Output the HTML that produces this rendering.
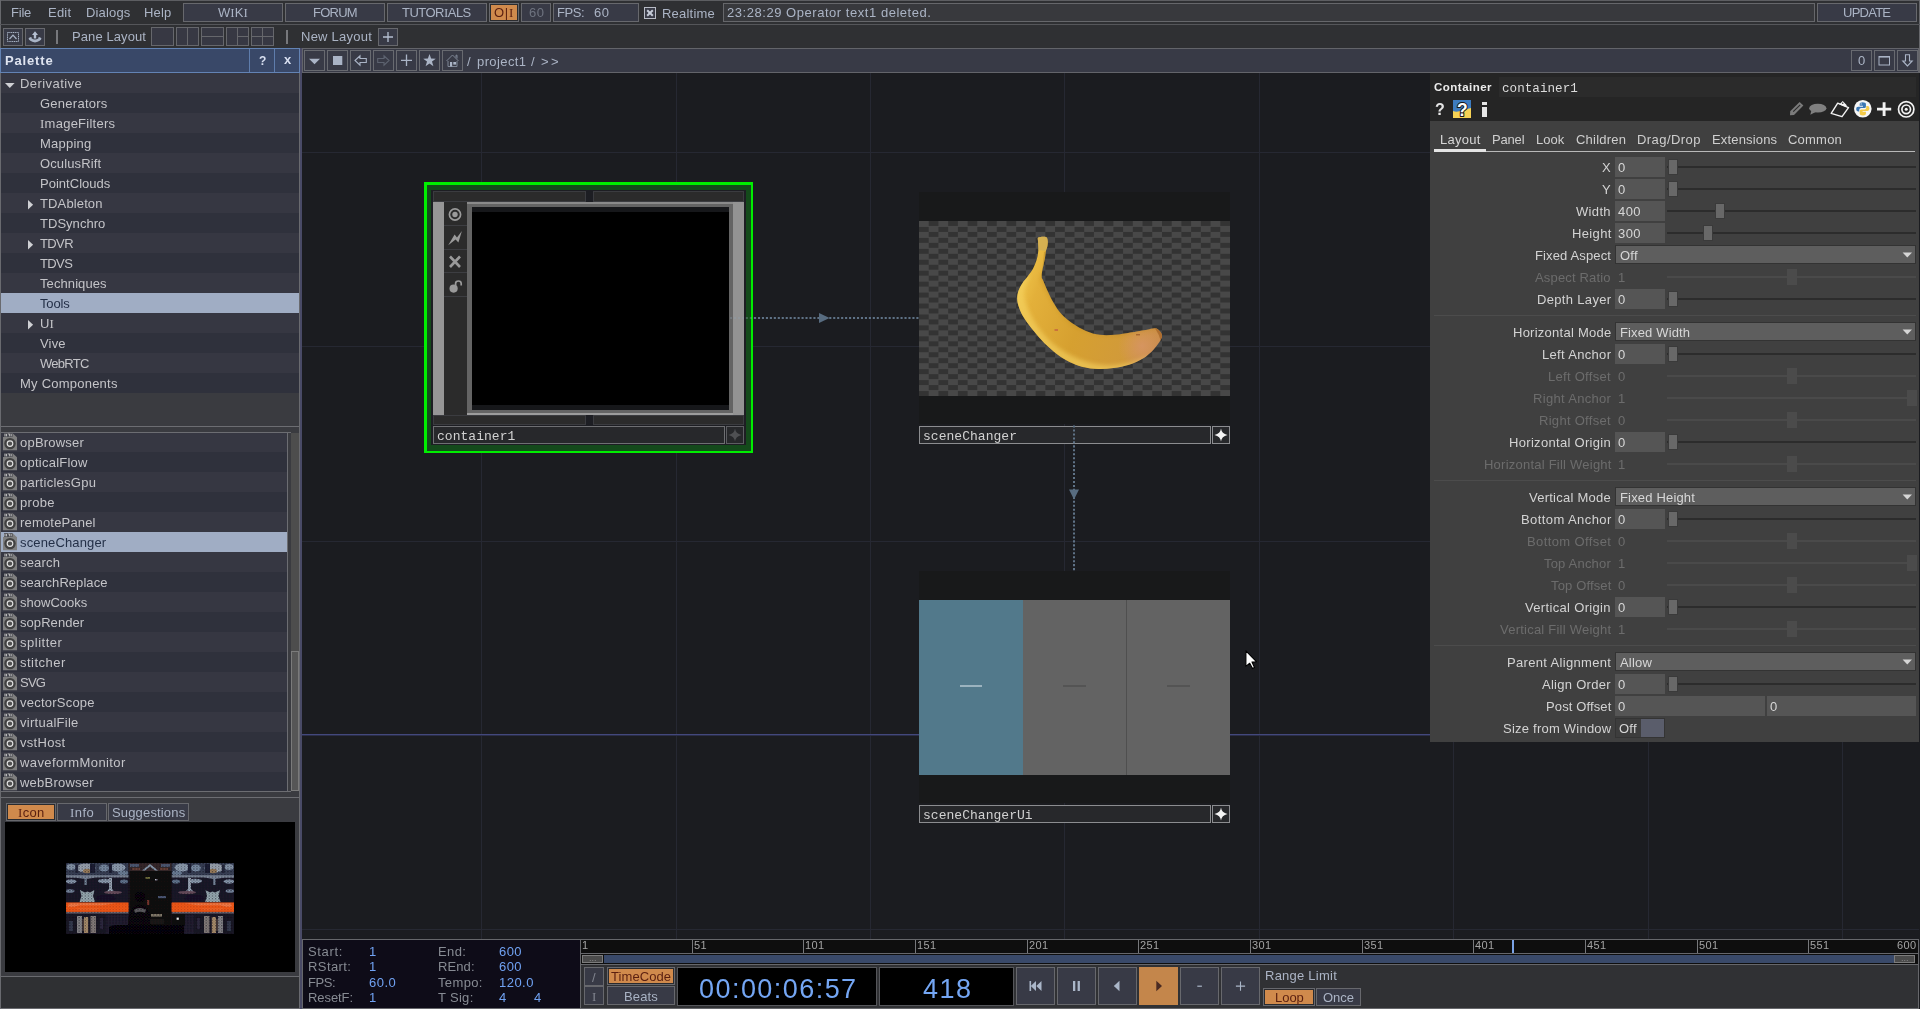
<!DOCTYPE html>
<html><head><meta charset="utf-8"><title>TouchDesigner</title>
<style>
html,body{margin:0;padding:0;}
body{width:1920px;height:1009px;overflow:hidden;background:#2f3033;position:relative;font-family:"Liberation Sans",sans-serif;}
div,svg,span.t{position:absolute;}
span.t{white-space:pre;will-change:transform;}
i.s{font-style:normal;font-family:"Liberation Serif",serif;}
svg{overflow:visible;}
</style></head><body>
<div style="left:0px;top:0px;width:1920px;height:1px;background:#5d5e62;"></div>
<div style="left:0px;top:0px;width:1px;height:1009px;background:#67686c;"></div>
<div style="left:1919px;top:0px;width:1px;height:73px;background:#67686c;"></div>
<div style="left:0px;top:1008px;width:1919px;height:1px;background:#5d5e62;"></div>
<div style="left:0px;top:24px;width:1920px;height:1px;background:#55565a;"></div>
<span class="t" style="left:11.00px;top:4.00px;font-size:13px;line-height:17px;color:#abb4c5;letter-spacing:-0.22px;">File</span>
<span class="t" style="left:48.00px;top:4.00px;font-size:13px;line-height:17px;color:#abb4c5;letter-spacing:0.21px;">Edit</span>
<span class="t" style="left:85.50px;top:4.00px;font-size:13px;line-height:17px;color:#abb4c5;letter-spacing:0.16px;">Dialogs</span>
<span class="t" style="left:143.50px;top:4.00px;font-size:13px;line-height:17px;color:#abb4c5;letter-spacing:0.15px;">Help</span>
<div style="left:183px;top:3px;width:100px;height:19px;background:#383a46;box-shadow:inset 0 0 0 1px #67686d;"></div>
<span class="t" style="left:218.13px;top:4.00px;font-size:13px;line-height:17px;color:#aab3c4;letter-spacing:0.05px;">W<i class="s">I</i>K<i class="s">I</i></span>
<div style="left:285px;top:3px;width:100px;height:19px;background:#383a46;box-shadow:inset 0 0 0 1px #67686d;"></div>
<span class="t" style="left:312.71px;top:4.00px;font-size:13px;line-height:17px;color:#aab3c4;letter-spacing:-0.77px;">FORUM</span>
<div style="left:387px;top:3px;width:100px;height:19px;background:#383a46;box-shadow:inset 0 0 0 1px #67686d;"></div>
<span class="t" style="left:402.36px;top:4.00px;font-size:13px;line-height:17px;color:#aab3c4;letter-spacing:-0.52px;">TUTOR<i class="s">I</i>ALS</span>
<div style="left:489px;top:3px;width:30px;height:19px;background:#2b2c30;box-shadow:inset 0 0 0 1px #67686d;"></div>
<div style="left:491px;top:5px;width:26px;height:15px;background:#d08a4c;"></div>
<span class="t" style="left:494.39px;top:4.00px;font-size:13px;line-height:17px;color:#5a1f10;letter-spacing:0.7px;">O|<i class="s">I</i></span>
<div style="left:521px;top:3px;width:30px;height:19px;background:#383a46;box-shadow:inset 0 0 0 1px #67686d;"></div>
<span class="t" style="left:528.57px;top:4.00px;font-size:13px;line-height:17px;color:#6f7480;letter-spacing:0.4px;">60</span>
<div style="left:553px;top:3px;width:86px;height:19px;background:#383a46;box-shadow:inset 0 0 0 1px #67686d;"></div>
<span class="t" style="left:557.00px;top:4.00px;font-size:13px;line-height:17px;color:#abb4c5;letter-spacing:-0.42px;">FPS:</span>
<span class="t" style="left:593.50px;top:4.00px;font-size:13px;line-height:17px;color:#abb4c5;letter-spacing:0.4px;">60</span>
<div style="left:644px;top:7px;width:12px;height:12px;background:#3a3c48;box-shadow:inset 0 0 0 1px #b8bcc6;"></div>
<svg style="left:644px;top:7px;" width="12" height="12" viewBox="0 0 12 12"><path d="M3.2 3.2 L8.8 8.8 M8.8 3.2 L3.2 8.8" stroke="#c6ccd8" stroke-width="2" fill="none"/></svg>
<span class="t" style="left:662.00px;top:4.50px;font-size:13px;line-height:17px;color:#abb4c5;letter-spacing:0.21px;">Realtime</span>
<div style="left:723px;top:3px;width:1092px;height:19px;background:#38393d;box-shadow:inset 0 0 0 1px #66676b;"></div>
<span class="t" style="left:727.00px;top:4.00px;font-size:13px;line-height:17px;color:#abb4c5;letter-spacing:0.54px;">23:28:29 Operator text1 deleted.</span>
<div style="left:1817px;top:3px;width:100px;height:19px;background:#383a46;box-shadow:inset 0 0 0 1px #67686d;"></div>
<span class="t" style="left:1842.99px;top:4.00px;font-size:13px;line-height:17px;color:#aab3c4;letter-spacing:-0.75px;">UPDATE</span>
<div style="left:3px;top:28px;width:20px;height:18px;background:#383a46;box-shadow:inset 0 0 0 1px #67686d;"></div>
<svg style="left:3px;top:28px;" width="20" height="18" viewBox="0 0 20 18"><rect x="4.5" y="4.5" width="11" height="9" fill="none" stroke="#a9b4c6" stroke-width="1" stroke-dasharray="1.2 0.6"/><path d="M6.5 11 L10 7.2 L13.5 11" fill="none" stroke="#a9b4c6" stroke-width="1.2"/></svg>
<div style="left:25px;top:28px;width:20px;height:18px;background:#383a46;box-shadow:inset 0 0 0 1px #67686d;"></div>
<svg style="left:25px;top:28px;" width="20" height="18" viewBox="0 0 20 18"><path d="M10 3.2 L13 7 L11.2 7 L11.2 10.5 L8.8 10.5 L8.8 7 L7 7 Z" fill="#b4bfd1"/><path d="M3.5 10.5 Q4.5 8.8 6.5 9 L6.5 10.2 Q10 12.6 13.5 10.2 L13.5 9 Q15.5 8.8 16.5 10.5 Q16 13.2 10 14.6 Q4 13.2 3.5 10.5 Z" fill="#a9b4c6"/></svg>
<div style="left:56px;top:30px;width:2px;height:14px;background:#77787c;"></div>
<span class="t" style="left:72.00px;top:28.00px;font-size:13px;line-height:17px;color:#abb4c5;letter-spacing:0.09px;">Pane Layout</span>
<div style="left:151px;top:27px;width:23px;height:19px;background:#373843;box-shadow:inset 0 0 0 1px #66676c;"></div>
<div style="left:176px;top:27px;width:23px;height:19px;background:#373843;box-shadow:inset 0 0 0 1px #66676c;"></div>
<div style="left:187px;top:27px;width:1px;height:19px;background:#66676c;"></div>
<div style="left:201px;top:27px;width:23px;height:19px;background:#373843;box-shadow:inset 0 0 0 1px #66676c;"></div>
<div style="left:201px;top:36px;width:23px;height:1px;background:#66676c;"></div>
<div style="left:226px;top:27px;width:23px;height:19px;background:#373843;box-shadow:inset 0 0 0 1px #66676c;"></div>
<div style="left:237px;top:27px;width:1px;height:19px;background:#66676c;"></div>
<div style="left:237px;top:36px;width:12px;height:1px;background:#66676c;"></div>
<div style="left:251px;top:27px;width:23px;height:19px;background:#373843;box-shadow:inset 0 0 0 1px #66676c;"></div>
<div style="left:262px;top:27px;width:1px;height:19px;background:#66676c;"></div>
<div style="left:251px;top:36px;width:23px;height:1px;background:#66676c;"></div>
<div style="left:286px;top:30px;width:2px;height:14px;background:#77787c;"></div>
<span class="t" style="left:301.00px;top:28.00px;font-size:13px;line-height:17px;color:#abb4c5;letter-spacing:0.25px;">New Layout</span>
<div style="left:378px;top:28px;width:20px;height:18px;background:#383a46;box-shadow:inset 0 0 0 1px #67686d;"></div>
<svg style="left:378px;top:28px;" width="20" height="18" viewBox="0 0 20 18"><path d="M10 4 V14 M5 9 H15" stroke="#b4bfd1" stroke-width="1.3" fill="none"/></svg>
<div style="left:0px;top:48px;width:300px;height:25px;background:#6383b4;"></div>
<div style="left:1px;top:49px;width:298px;height:23px;background:#394868;"></div>
<div style="left:249px;top:49px;width:1px;height:23px;background:#5f7dac;"></div>
<div style="left:274px;top:49px;width:1px;height:23px;background:#5f7dac;"></div>
<span class="t" style="left:5.00px;top:52.00px;font-size:13px;line-height:17px;color:#dfe4f0;letter-spacing:0.83px;font-weight:bold;">Palette</span>
<span class="t" style="left:259.13px;top:53.00px;font-size:12px;line-height:16px;color:#d8dff0;letter-spacing:-0.37px;font-weight:bold;">?</span>
<span class="t" style="left:283.58px;top:50.70px;font-size:13px;line-height:17px;color:#d8dff0;letter-spacing:0.51px;font-weight:bold;">x</span>
<div style="left:0px;top:73px;width:300px;height:936px;background:#696a6f;"></div>
<div style="left:1px;top:73px;width:298px;height:904px;background:#3a3b40;"></div>
<div style="left:1px;top:977px;width:298px;height:31px;background:#2f3033;"></div>
<div style="left:1px;top:976px;width:298px;height:1px;background:#696a6f;"></div>
<div style="left:1px;top:73px;width:298px;height:20px;background:#363742;"></div>
<span class="t" style="left:20.00px;top:75.00px;font-size:13px;line-height:17px;color:#c4c4c8;letter-spacing:0.43px;">Derivative</span>
<svg style="left:4.7px;top:82.6px;" width="10" height="6" viewBox="0 0 10 6"><path d="M0 0 H9.6 L4.8 5 Z" fill="#cfd0d4"/></svg>
<div style="left:1px;top:93px;width:298px;height:20px;background:#2f313c;"></div>
<span class="t" style="left:40.00px;top:95.00px;font-size:13px;line-height:17px;color:#c4c4c8;letter-spacing:0.26px;">Generators</span>
<div style="left:1px;top:113px;width:298px;height:20px;background:#363742;"></div>
<span class="t" style="left:40.00px;top:115.00px;font-size:13px;line-height:17px;color:#c4c4c8;letter-spacing:0.25px;"><i class="s">I</i>mageFilters</span>
<div style="left:1px;top:133px;width:298px;height:20px;background:#2f313c;"></div>
<span class="t" style="left:40.00px;top:135.00px;font-size:13px;line-height:17px;color:#c4c4c8;letter-spacing:0.23px;">Mapping</span>
<div style="left:1px;top:153px;width:298px;height:20px;background:#363742;"></div>
<span class="t" style="left:40.00px;top:155.00px;font-size:13px;line-height:17px;color:#c4c4c8;letter-spacing:0.13px;">OculusRift</span>
<div style="left:1px;top:173px;width:298px;height:20px;background:#2f313c;"></div>
<span class="t" style="left:40.00px;top:175.00px;font-size:13px;line-height:17px;color:#c4c4c8;letter-spacing:0.02px;">PointClouds</span>
<div style="left:1px;top:193px;width:298px;height:20px;background:#363742;"></div>
<span class="t" style="left:40.00px;top:195.00px;font-size:13px;line-height:17px;color:#c4c4c8;letter-spacing:0.13px;">TDAbleton</span>
<svg style="left:27.8px;top:199.8px;" width="6" height="11" viewBox="0 0 6 11"><path d="M0 0 L5.1 4.7 L0 9.4 Z" fill="#cfd0d4"/></svg>
<div style="left:1px;top:213px;width:298px;height:20px;background:#2f313c;"></div>
<span class="t" style="left:40.00px;top:215.00px;font-size:13px;line-height:17px;color:#c4c4c8;letter-spacing:0.03px;">TDSynchro</span>
<div style="left:1px;top:233px;width:298px;height:20px;background:#363742;"></div>
<span class="t" style="left:40.00px;top:235.00px;font-size:13px;line-height:17px;color:#c4c4c8;letter-spacing:-0.62px;">TDVR</span>
<svg style="left:27.8px;top:239.8px;" width="6" height="11" viewBox="0 0 6 11"><path d="M0 0 L5.1 4.7 L0 9.4 Z" fill="#cfd0d4"/></svg>
<div style="left:1px;top:253px;width:298px;height:20px;background:#2f313c;"></div>
<span class="t" style="left:40.00px;top:255.00px;font-size:13px;line-height:17px;color:#c4c4c8;letter-spacing:-0.62px;">TDVS</span>
<div style="left:1px;top:273px;width:298px;height:20px;background:#363742;"></div>
<span class="t" style="left:40.00px;top:275.00px;font-size:13px;line-height:17px;color:#c4c4c8;letter-spacing:0.09px;">Techniques</span>
<div style="left:1px;top:293px;width:298px;height:20px;background:#a0adc4;"></div>
<span class="t" style="left:40.00px;top:295.00px;font-size:13px;line-height:17px;color:#243048;letter-spacing:-0.16px;">Tools</span>
<div style="left:1px;top:313px;width:298px;height:20px;background:#363742;"></div>
<span class="t" style="left:40.00px;top:315.00px;font-size:13px;line-height:17px;color:#c4c4c8;letter-spacing:0.05px;">U<i class="s">I</i></span>
<svg style="left:27.8px;top:319.8px;" width="6" height="11" viewBox="0 0 6 11"><path d="M0 0 L5.1 4.7 L0 9.4 Z" fill="#cfd0d4"/></svg>
<div style="left:1px;top:333px;width:298px;height:20px;background:#2f313c;"></div>
<span class="t" style="left:40.00px;top:335.00px;font-size:13px;line-height:17px;color:#c4c4c8;letter-spacing:0.18px;">Vive</span>
<div style="left:1px;top:353px;width:298px;height:20px;background:#363742;"></div>
<span class="t" style="left:40.00px;top:355.00px;font-size:13px;line-height:17px;color:#c4c4c8;letter-spacing:-0.72px;">WebRTC</span>
<div style="left:1px;top:373px;width:298px;height:20px;background:#2f313c;"></div>
<span class="t" style="left:20.00px;top:375.00px;font-size:13px;line-height:17px;color:#c4c4c8;letter-spacing:0.23px;">My Components</span>
<div style="left:1px;top:426px;width:298px;height:1px;background:#6c6d72;"></div>
<div style="left:1px;top:432px;width:290px;height:1px;background:#6c6d72;"></div>
<div style="left:287px;top:432px;width:1px;height:360px;background:#6c6d72;"></div>
<div style="left:1px;top:791px;width:290px;height:1px;background:#6c6d72;"></div>
<div style="left:1px;top:433px;width:286px;height:19px;background:#363742;"></div>
<svg style="left:3px;top:433.3px;" width="14" height="18" viewBox="0 0 14 18"><path d="M0 4 H1 V0.3 H9.6 L14 4.3 V17.3 H0 Z" fill="#7f7f7f"/><rect x="1" y="0.3" width="8.6" height="3.6" fill="#4a4b52"/><path d="M2 1 V3.3 M3.5 1 V3.3 M5.2 1 H6.6 V3.3 M8.2 1 V3.3" stroke="#c4c4c4" stroke-width="0.9" fill="none"/><circle cx="7" cy="10.6" r="5.7" fill="#414141"/><circle cx="7" cy="10.6" r="2.8" fill="#505050" stroke="#e2e2e2" stroke-width="1.15"/></svg>
<span class="t" style="left:20.00px;top:434.00px;font-size:13px;line-height:17px;color:#c4c4c8;letter-spacing:0.21px;">opBrowser</span>
<div style="left:1px;top:452px;width:286px;height:20px;background:#2f313c;"></div>
<svg style="left:3px;top:453.3px;" width="14" height="18" viewBox="0 0 14 18"><path d="M0 4 H1 V0.3 H9.6 L14 4.3 V17.3 H0 Z" fill="#7f7f7f"/><rect x="1" y="0.3" width="8.6" height="3.6" fill="#4a4b52"/><path d="M2 1 V3.3 M3.5 1 V3.3 M5.2 1 H6.6 V3.3 M8.2 1 V3.3" stroke="#c4c4c4" stroke-width="0.9" fill="none"/><circle cx="7" cy="10.6" r="5.7" fill="#414141"/><circle cx="7" cy="10.6" r="2.8" fill="#505050" stroke="#e2e2e2" stroke-width="1.15"/></svg>
<span class="t" style="left:20.00px;top:454.00px;font-size:13px;line-height:17px;color:#c4c4c8;letter-spacing:0.24px;">opticalFlow</span>
<div style="left:1px;top:472px;width:286px;height:20px;background:#363742;"></div>
<svg style="left:3px;top:473.3px;" width="14" height="18" viewBox="0 0 14 18"><path d="M0 4 H1 V0.3 H9.6 L14 4.3 V17.3 H0 Z" fill="#7f7f7f"/><rect x="1" y="0.3" width="8.6" height="3.6" fill="#4a4b52"/><path d="M2 1 V3.3 M3.5 1 V3.3 M5.2 1 H6.6 V3.3 M8.2 1 V3.3" stroke="#c4c4c4" stroke-width="0.9" fill="none"/><circle cx="7" cy="10.6" r="5.7" fill="#414141"/><circle cx="7" cy="10.6" r="2.8" fill="#505050" stroke="#e2e2e2" stroke-width="1.15"/></svg>
<span class="t" style="left:20.00px;top:474.00px;font-size:13px;line-height:17px;color:#c4c4c8;letter-spacing:0.27px;">particlesGpu</span>
<div style="left:1px;top:492px;width:286px;height:20px;background:#2f313c;"></div>
<svg style="left:3px;top:493.3px;" width="14" height="18" viewBox="0 0 14 18"><path d="M0 4 H1 V0.3 H9.6 L14 4.3 V17.3 H0 Z" fill="#7f7f7f"/><rect x="1" y="0.3" width="8.6" height="3.6" fill="#4a4b52"/><path d="M2 1 V3.3 M3.5 1 V3.3 M5.2 1 H6.6 V3.3 M8.2 1 V3.3" stroke="#c4c4c4" stroke-width="0.9" fill="none"/><circle cx="7" cy="10.6" r="5.7" fill="#414141"/><circle cx="7" cy="10.6" r="2.8" fill="#505050" stroke="#e2e2e2" stroke-width="1.15"/></svg>
<span class="t" style="left:20.00px;top:494.00px;font-size:13px;line-height:17px;color:#c4c4c8;letter-spacing:0.32px;">probe</span>
<div style="left:1px;top:512px;width:286px;height:20px;background:#363742;"></div>
<svg style="left:3px;top:513.3px;" width="14" height="18" viewBox="0 0 14 18"><path d="M0 4 H1 V0.3 H9.6 L14 4.3 V17.3 H0 Z" fill="#7f7f7f"/><rect x="1" y="0.3" width="8.6" height="3.6" fill="#4a4b52"/><path d="M2 1 V3.3 M3.5 1 V3.3 M5.2 1 H6.6 V3.3 M8.2 1 V3.3" stroke="#c4c4c4" stroke-width="0.9" fill="none"/><circle cx="7" cy="10.6" r="5.7" fill="#414141"/><circle cx="7" cy="10.6" r="2.8" fill="#505050" stroke="#e2e2e2" stroke-width="1.15"/></svg>
<span class="t" style="left:20.00px;top:514.00px;font-size:13px;line-height:17px;color:#c4c4c8;letter-spacing:0.18px;">remotePanel</span>
<div style="left:1px;top:532px;width:286px;height:20px;background:#a0adc4;"></div>
<svg style="left:3px;top:533.3px;" width="14" height="18" viewBox="0 0 14 18"><path d="M0 4 H1 V0.3 H9.6 L14 4.3 V17.3 H0 Z" fill="#7f7f7f"/><rect x="1" y="0.3" width="8.6" height="3.6" fill="#4a4b52"/><path d="M2 1 V3.3 M3.5 1 V3.3 M5.2 1 H6.6 V3.3 M8.2 1 V3.3" stroke="#c4c4c4" stroke-width="0.9" fill="none"/><circle cx="7" cy="10.6" r="5.7" fill="#414141"/><circle cx="7" cy="10.6" r="2.8" fill="#505050" stroke="#e2e2e2" stroke-width="1.15"/></svg>
<span class="t" style="left:20.00px;top:534.00px;font-size:13px;line-height:17px;color:#243048;letter-spacing:0.14px;">sceneChanger</span>
<div style="left:1px;top:552px;width:286px;height:20px;background:#363742;"></div>
<svg style="left:3px;top:553.3px;" width="14" height="18" viewBox="0 0 14 18"><path d="M0 4 H1 V0.3 H9.6 L14 4.3 V17.3 H0 Z" fill="#7f7f7f"/><rect x="1" y="0.3" width="8.6" height="3.6" fill="#4a4b52"/><path d="M2 1 V3.3 M3.5 1 V3.3 M5.2 1 H6.6 V3.3 M8.2 1 V3.3" stroke="#c4c4c4" stroke-width="0.9" fill="none"/><circle cx="7" cy="10.6" r="5.7" fill="#414141"/><circle cx="7" cy="10.6" r="2.8" fill="#505050" stroke="#e2e2e2" stroke-width="1.15"/></svg>
<span class="t" style="left:20.00px;top:554.00px;font-size:13px;line-height:17px;color:#c4c4c8;letter-spacing:0.17px;">search</span>
<div style="left:1px;top:572px;width:286px;height:20px;background:#2f313c;"></div>
<svg style="left:3px;top:573.3px;" width="14" height="18" viewBox="0 0 14 18"><path d="M0 4 H1 V0.3 H9.6 L14 4.3 V17.3 H0 Z" fill="#7f7f7f"/><rect x="1" y="0.3" width="8.6" height="3.6" fill="#4a4b52"/><path d="M2 1 V3.3 M3.5 1 V3.3 M5.2 1 H6.6 V3.3 M8.2 1 V3.3" stroke="#c4c4c4" stroke-width="0.9" fill="none"/><circle cx="7" cy="10.6" r="5.7" fill="#414141"/><circle cx="7" cy="10.6" r="2.8" fill="#505050" stroke="#e2e2e2" stroke-width="1.15"/></svg>
<span class="t" style="left:20.00px;top:574.00px;font-size:13px;line-height:17px;color:#c4c4c8;letter-spacing:0.06px;">searchReplace</span>
<div style="left:1px;top:592px;width:286px;height:20px;background:#363742;"></div>
<svg style="left:3px;top:593.3px;" width="14" height="18" viewBox="0 0 14 18"><path d="M0 4 H1 V0.3 H9.6 L14 4.3 V17.3 H0 Z" fill="#7f7f7f"/><rect x="1" y="0.3" width="8.6" height="3.6" fill="#4a4b52"/><path d="M2 1 V3.3 M3.5 1 V3.3 M5.2 1 H6.6 V3.3 M8.2 1 V3.3" stroke="#c4c4c4" stroke-width="0.9" fill="none"/><circle cx="7" cy="10.6" r="5.7" fill="#414141"/><circle cx="7" cy="10.6" r="2.8" fill="#505050" stroke="#e2e2e2" stroke-width="1.15"/></svg>
<span class="t" style="left:20.00px;top:594.00px;font-size:13px;line-height:17px;color:#c4c4c8;letter-spacing:0.01px;">showCooks</span>
<div style="left:1px;top:612px;width:286px;height:20px;background:#2f313c;"></div>
<svg style="left:3px;top:613.3px;" width="14" height="18" viewBox="0 0 14 18"><path d="M0 4 H1 V0.3 H9.6 L14 4.3 V17.3 H0 Z" fill="#7f7f7f"/><rect x="1" y="0.3" width="8.6" height="3.6" fill="#4a4b52"/><path d="M2 1 V3.3 M3.5 1 V3.3 M5.2 1 H6.6 V3.3 M8.2 1 V3.3" stroke="#c4c4c4" stroke-width="0.9" fill="none"/><circle cx="7" cy="10.6" r="5.7" fill="#414141"/><circle cx="7" cy="10.6" r="2.8" fill="#505050" stroke="#e2e2e2" stroke-width="1.15"/></svg>
<span class="t" style="left:20.00px;top:614.00px;font-size:13px;line-height:17px;color:#c4c4c8;letter-spacing:0.06px;">sopRender</span>
<div style="left:1px;top:632px;width:286px;height:20px;background:#363742;"></div>
<svg style="left:3px;top:633.3px;" width="14" height="18" viewBox="0 0 14 18"><path d="M0 4 H1 V0.3 H9.6 L14 4.3 V17.3 H0 Z" fill="#7f7f7f"/><rect x="1" y="0.3" width="8.6" height="3.6" fill="#4a4b52"/><path d="M2 1 V3.3 M3.5 1 V3.3 M5.2 1 H6.6 V3.3 M8.2 1 V3.3" stroke="#c4c4c4" stroke-width="0.9" fill="none"/><circle cx="7" cy="10.6" r="5.7" fill="#414141"/><circle cx="7" cy="10.6" r="2.8" fill="#505050" stroke="#e2e2e2" stroke-width="1.15"/></svg>
<span class="t" style="left:20.00px;top:634.00px;font-size:13px;line-height:17px;color:#c4c4c8;letter-spacing:0.52px;">splitter</span>
<div style="left:1px;top:652px;width:286px;height:20px;background:#2f313c;"></div>
<svg style="left:3px;top:653.3px;" width="14" height="18" viewBox="0 0 14 18"><path d="M0 4 H1 V0.3 H9.6 L14 4.3 V17.3 H0 Z" fill="#7f7f7f"/><rect x="1" y="0.3" width="8.6" height="3.6" fill="#4a4b52"/><path d="M2 1 V3.3 M3.5 1 V3.3 M5.2 1 H6.6 V3.3 M8.2 1 V3.3" stroke="#c4c4c4" stroke-width="0.9" fill="none"/><circle cx="7" cy="10.6" r="5.7" fill="#414141"/><circle cx="7" cy="10.6" r="2.8" fill="#505050" stroke="#e2e2e2" stroke-width="1.15"/></svg>
<span class="t" style="left:20.00px;top:654.00px;font-size:13px;line-height:17px;color:#c4c4c8;letter-spacing:0.48px;">stitcher</span>
<div style="left:1px;top:672px;width:286px;height:20px;background:#363742;"></div>
<svg style="left:3px;top:673.3px;" width="14" height="18" viewBox="0 0 14 18"><path d="M0 4 H1 V0.3 H9.6 L14 4.3 V17.3 H0 Z" fill="#7f7f7f"/><rect x="1" y="0.3" width="8.6" height="3.6" fill="#4a4b52"/><path d="M2 1 V3.3 M3.5 1 V3.3 M5.2 1 H6.6 V3.3 M8.2 1 V3.3" stroke="#c4c4c4" stroke-width="0.9" fill="none"/><circle cx="7" cy="10.6" r="5.7" fill="#414141"/><circle cx="7" cy="10.6" r="2.8" fill="#505050" stroke="#e2e2e2" stroke-width="1.15"/></svg>
<span class="t" style="left:20.00px;top:674.00px;font-size:13px;line-height:17px;color:#c4c4c8;letter-spacing:-0.78px;">SVG</span>
<div style="left:1px;top:692px;width:286px;height:20px;background:#2f313c;"></div>
<svg style="left:3px;top:693.3px;" width="14" height="18" viewBox="0 0 14 18"><path d="M0 4 H1 V0.3 H9.6 L14 4.3 V17.3 H0 Z" fill="#7f7f7f"/><rect x="1" y="0.3" width="8.6" height="3.6" fill="#4a4b52"/><path d="M2 1 V3.3 M3.5 1 V3.3 M5.2 1 H6.6 V3.3 M8.2 1 V3.3" stroke="#c4c4c4" stroke-width="0.9" fill="none"/><circle cx="7" cy="10.6" r="5.7" fill="#414141"/><circle cx="7" cy="10.6" r="2.8" fill="#505050" stroke="#e2e2e2" stroke-width="1.15"/></svg>
<span class="t" style="left:20.00px;top:694.00px;font-size:13px;line-height:17px;color:#c4c4c8;letter-spacing:0.23px;">vectorScope</span>
<div style="left:1px;top:712px;width:286px;height:20px;background:#363742;"></div>
<svg style="left:3px;top:713.3px;" width="14" height="18" viewBox="0 0 14 18"><path d="M0 4 H1 V0.3 H9.6 L14 4.3 V17.3 H0 Z" fill="#7f7f7f"/><rect x="1" y="0.3" width="8.6" height="3.6" fill="#4a4b52"/><path d="M2 1 V3.3 M3.5 1 V3.3 M5.2 1 H6.6 V3.3 M8.2 1 V3.3" stroke="#c4c4c4" stroke-width="0.9" fill="none"/><circle cx="7" cy="10.6" r="5.7" fill="#414141"/><circle cx="7" cy="10.6" r="2.8" fill="#505050" stroke="#e2e2e2" stroke-width="1.15"/></svg>
<span class="t" style="left:20.00px;top:714.00px;font-size:13px;line-height:17px;color:#c4c4c8;letter-spacing:0.27px;">virtualFile</span>
<div style="left:1px;top:732px;width:286px;height:20px;background:#2f313c;"></div>
<svg style="left:3px;top:733.3px;" width="14" height="18" viewBox="0 0 14 18"><path d="M0 4 H1 V0.3 H9.6 L14 4.3 V17.3 H0 Z" fill="#7f7f7f"/><rect x="1" y="0.3" width="8.6" height="3.6" fill="#4a4b52"/><path d="M2 1 V3.3 M3.5 1 V3.3 M5.2 1 H6.6 V3.3 M8.2 1 V3.3" stroke="#c4c4c4" stroke-width="0.9" fill="none"/><circle cx="7" cy="10.6" r="5.7" fill="#414141"/><circle cx="7" cy="10.6" r="2.8" fill="#505050" stroke="#e2e2e2" stroke-width="1.15"/></svg>
<span class="t" style="left:20.00px;top:734.00px;font-size:13px;line-height:17px;color:#c4c4c8;letter-spacing:0.29px;">vstHost</span>
<div style="left:1px;top:752px;width:286px;height:20px;background:#363742;"></div>
<svg style="left:3px;top:753.3px;" width="14" height="18" viewBox="0 0 14 18"><path d="M0 4 H1 V0.3 H9.6 L14 4.3 V17.3 H0 Z" fill="#7f7f7f"/><rect x="1" y="0.3" width="8.6" height="3.6" fill="#4a4b52"/><path d="M2 1 V3.3 M3.5 1 V3.3 M5.2 1 H6.6 V3.3 M8.2 1 V3.3" stroke="#c4c4c4" stroke-width="0.9" fill="none"/><circle cx="7" cy="10.6" r="5.7" fill="#414141"/><circle cx="7" cy="10.6" r="2.8" fill="#505050" stroke="#e2e2e2" stroke-width="1.15"/></svg>
<span class="t" style="left:20.00px;top:754.00px;font-size:13px;line-height:17px;color:#c4c4c8;letter-spacing:0.4px;">waveformMonitor</span>
<div style="left:1px;top:772px;width:286px;height:19px;background:#2f313c;"></div>
<svg style="left:3px;top:773.3px;" width="14" height="18" viewBox="0 0 14 18"><path d="M0 4 H1 V0.3 H9.6 L14 4.3 V17.3 H0 Z" fill="#7f7f7f"/><rect x="1" y="0.3" width="8.6" height="3.6" fill="#4a4b52"/><path d="M2 1 V3.3 M3.5 1 V3.3 M5.2 1 H6.6 V3.3 M8.2 1 V3.3" stroke="#c4c4c4" stroke-width="0.9" fill="none"/><circle cx="7" cy="10.6" r="5.7" fill="#414141"/><circle cx="7" cy="10.6" r="2.8" fill="#505050" stroke="#e2e2e2" stroke-width="1.15"/></svg>
<span class="t" style="left:20.00px;top:774.00px;font-size:13px;line-height:17px;color:#c4c4c8;letter-spacing:0.23px;">webBrowser</span>
<div style="left:291px;top:433px;width:8px;height:358px;background:#4d4d4d;"></div>
<div style="left:291px;top:651px;width:8px;height:140px;background:#565656;box-shadow:inset 0 0 0 1px #7b7b7b;"></div>
<div style="left:1px;top:797px;width:298px;height:1px;background:#6c6d72;"></div>
<div style="left:6px;top:803px;width:50px;height:18px;background:#2a2b2f;box-shadow:inset 0 0 0 1px #67686d;"></div>
<div style="left:8px;top:805px;width:46px;height:14px;background:#d08a4c;"></div>
<span class="t" style="left:17.87px;top:803.50px;font-size:13px;line-height:17px;color:#5a1f10;letter-spacing:0.32px;"><i class="s">I</i>con</span>
<div style="left:57px;top:803px;width:50px;height:18px;background:#383a46;box-shadow:inset 0 0 0 1px #67686d;"></div>
<span class="t" style="left:70.12px;top:803.50px;font-size:13px;line-height:17px;color:#abb4c5;letter-spacing:0.45px;"><i class="s">I</i>nfo</span>
<div style="left:108px;top:803px;width:81px;height:18px;background:#383a46;box-shadow:inset 0 0 0 1px #67686d;"></div>
<span class="t" style="left:111.92px;top:803.50px;font-size:13px;line-height:17px;color:#abb4c5;letter-spacing:0.16px;">Suggestions</span>
<div style="left:5px;top:822px;width:290px;height:150px;background:#000;"></div>
<svg style="left:66px;top:862.5px;" width="168" height="71" viewBox="0 0 168 71"><defs><filter id="bl" x="-5%" y="-5%" width="110%" height="110%"><feGaussianBlur stdDeviation="0.75"/></filter><clipPath id="tc"><rect width="168" height="71"/></clipPath><pattern id="nz" width="3.1" height="2.7" patternUnits="userSpaceOnUse"><rect x="0" y="0" width="1.5" height="1.3" fill="#120e1c" opacity=".55"/><rect x="1.7" y="1.4" width="1.2" height="1.1" fill="#2a1c30" opacity=".4"/></pattern></defs>
<g clip-path="url(#tc)"><g filter="url(#bl)">
<rect width="168" height="71" fill="#18141c"/>
<g >
<rect x="0" y="0" width="62.5" height="71" fill="#1b192b"/>
<rect x="0" y="0" width="62.5" height="13" fill="#3f4a62"/>
<ellipse cx="5" cy="4" rx="4.5" ry="3" fill="#9fb4c9"/><ellipse cx="20" cy="5" rx="9.5" ry="4.5" fill="#b9c6d2"/><ellipse cx="21" cy="8" rx="4" ry="2.2" fill="#b59468"/>
<ellipse cx="38" cy="5" rx="5" ry="3.5" fill="#8ea6c0"/><ellipse cx="52" cy="4.5" rx="7.5" ry="4" fill="#a9bed2"/><ellipse cx="57" cy="10" rx="5" ry="2.4" fill="#7f97b2"/>
<rect x="24" y="1" width="5" height="9" fill="#1d2238"/><rect x="43" y="1" width="3" height="9" fill="#20253b"/><rect x="9.5" y="2" width="2.6" height="8" fill="#252a40"/>
<path d="M0 12.2 H62.5 V14.6 H30 L20 16 L10 14.8 H0 Z" fill="#95a4b7"/>
<ellipse cx="5" cy="18.5" rx="5.5" ry="2.2" fill="#9db2c8"/><ellipse cx="39" cy="18" rx="7" ry="2.3" fill="#a3b7cc"/><ellipse cx="58" cy="18.5" rx="4" ry="2" fill="#7088a4"/>
<path d="M43 15 H46 V26 L49 29 H40 L43 26 Z" fill="#b4c4d4"/><rect x="18.5" y="15" width="2.2" height="7" fill="#8da2b8"/>
<ellipse cx="4" cy="28" rx="4.5" ry="1.8" fill="#8aa0b8"/><ellipse cx="47" cy="29.5" rx="9" ry="1.6" fill="#7a5a6a"/>
<path d="M14 27 L19 29.5 L21.5 28.5 L24 29.5 L28.5 27 L27 33 L29 39 H13.5 L15.5 33 Z" fill="#b3cbd1"/>
<ellipse cx="40" cy="35" rx="10" ry="3.6" fill="#15122a"/>
<rect x="0" y="39.3" width="62.5" height="9.8" fill="#ff5b18"/>
<path d="M3 40.2 H50 L36 42.2 H14 L8 43.8 H2 Z" fill="#ffd9c2" opacity=".85"/><path d="M10 45.5 H34 L30 46.6 H13 Z" fill="#ffc4a0" opacity=".6"/>
<rect x="0" y="49.1" width="62.5" height="1.6" fill="#8f8790"/>
<rect x="0" y="50.7" width="62.5" height="20.3" fill="#1a1626"/>
<rect x="11" y="53" width="5" height="17" fill="#9c9c9e"/><rect x="18" y="54" width="4.2" height="16" fill="#caa97c"/><rect x="24.5" y="53" width="5.5" height="17" fill="#9a928c"/><rect x="16.2" y="56" width="1.6" height="12" fill="#5a4a44"/>
<rect x="3" y="58" width="4" height="10" fill="#3a4258"/><rect x="34" y="55" width="3" height="11" fill="#322c44"/><rect x="40" y="52" width="22.5" height="19" fill="#231e32"/>
</g><g transform="translate(168,0) scale(-1,1)">
<rect x="0" y="0" width="62.5" height="71" fill="#1b192b"/>
<rect x="0" y="0" width="62.5" height="13" fill="#3f4a62"/>
<ellipse cx="5" cy="4" rx="4.5" ry="3" fill="#9fb4c9"/><ellipse cx="20" cy="5" rx="9.5" ry="4.5" fill="#b9c6d2"/><ellipse cx="21" cy="8" rx="4" ry="2.2" fill="#b59468"/>
<ellipse cx="38" cy="5" rx="5" ry="3.5" fill="#8ea6c0"/><ellipse cx="52" cy="4.5" rx="7.5" ry="4" fill="#a9bed2"/><ellipse cx="57" cy="10" rx="5" ry="2.4" fill="#7f97b2"/>
<rect x="24" y="1" width="5" height="9" fill="#1d2238"/><rect x="43" y="1" width="3" height="9" fill="#20253b"/><rect x="9.5" y="2" width="2.6" height="8" fill="#252a40"/>
<path d="M0 12.2 H62.5 V14.6 H30 L20 16 L10 14.8 H0 Z" fill="#95a4b7"/>
<ellipse cx="5" cy="18.5" rx="5.5" ry="2.2" fill="#9db2c8"/><ellipse cx="39" cy="18" rx="7" ry="2.3" fill="#a3b7cc"/><ellipse cx="58" cy="18.5" rx="4" ry="2" fill="#7088a4"/>
<path d="M43 15 H46 V26 L49 29 H40 L43 26 Z" fill="#b4c4d4"/><rect x="18.5" y="15" width="2.2" height="7" fill="#8da2b8"/>
<ellipse cx="4" cy="28" rx="4.5" ry="1.8" fill="#8aa0b8"/><ellipse cx="47" cy="29.5" rx="9" ry="1.6" fill="#7a5a6a"/>
<path d="M14 27 L19 29.5 L21.5 28.5 L24 29.5 L28.5 27 L27 33 L29 39 H13.5 L15.5 33 Z" fill="#b3cbd1"/>
<ellipse cx="40" cy="35" rx="10" ry="3.6" fill="#15122a"/>
<rect x="0" y="39.3" width="62.5" height="9.8" fill="#ff5b18"/>
<path d="M3 40.2 H50 L36 42.2 H14 L8 43.8 H2 Z" fill="#ffd9c2" opacity=".85"/><path d="M10 45.5 H34 L30 46.6 H13 Z" fill="#ffc4a0" opacity=".6"/>
<rect x="0" y="49.1" width="62.5" height="1.6" fill="#8f8790"/>
<rect x="0" y="50.7" width="62.5" height="20.3" fill="#1a1626"/>
<rect x="11" y="53" width="5" height="17" fill="#9c9c9e"/><rect x="18" y="54" width="4.2" height="16" fill="#caa97c"/><rect x="24.5" y="53" width="5.5" height="17" fill="#9a928c"/><rect x="16.2" y="56" width="1.6" height="12" fill="#5a4a44"/>
<rect x="3" y="58" width="4" height="10" fill="#3a4258"/><rect x="34" y="55" width="3" height="11" fill="#322c44"/><rect x="40" y="52" width="22.5" height="19" fill="#231e32"/>
</g>
<rect x="62.5" y="0" width="43" height="8.5" fill="#3d2c2c"/>
<path d="M76 7.5 L84 1 L92 7.5 L89 7.5 L84 3.6 L79 7.5 Z" fill="#a2bace"/><rect x="64" y="1" width="9" height="3" fill="#5a6a86"/><rect x="95" y="1" width="9" height="3" fill="#5a6a86"/><rect x="66" y="5" width="8" height="2" fill="#7a4a3a"/><rect x="94" y="5" width="8" height="2" fill="#7a4a3a"/>
<rect x="64" y="8" width="41.5" height="55" fill="#0e0b08"/>
<rect x="79.5" y="14" width="4.5" height="1.8" fill="#8b8c44"/><rect x="89" y="16" width="2.4" height="1.4" fill="#d8d8ea"/>
<rect x="92" y="33" width="8" height="2.2" fill="#586889"/><rect x="81" y="37" width="2.2" height="5" fill="#8e3d30"/>
<circle cx="74" cy="34" r="5.6" fill="#020202"/><path d="M62 62 Q62 42 74 41 Q85 42 86 62 Z" fill="#030303"/>
<path d="M68 46.5 Q74 43.5 80 46.5 L79 50 Q74 47.5 69 50 Z" fill="#6e6e70"/>
<rect x="85" y="51" width="11" height="2.6" fill="#9c947c"/><rect x="84" y="56" width="14" height="5" fill="#1c1814"/>
<rect x="106" y="51" width="13" height="12" fill="#08080a"/>
<path d="M43 71 V64 Q46 61.5 52 62 H116 Q118 62 118 64 V71 Z" fill="#000"/>
<rect width="168" height="71" fill="url(#nz)"/><rect width="168" height="71" fill="#0c0a14" opacity=".12"/><rect x="0" y="40" width="62.5" height="8.6" fill="#ff5b18" opacity=".6"/><rect x="105.5" y="40" width="62.5" height="8.6" fill="#ff5b18" opacity=".6"/></g><rect x="110.6" y="54.6" width="2.2" height="2.2" fill="#ececec"/></g></svg>
<div style="left:300px;top:48px;width:2px;height:961px;background:#494a66;"></div>
<div style="left:302px;top:73px;width:1618px;height:936px;background:#1b1c20;"></div>
<div style="left:481px;top:73px;width:1px;height:866px;background:#262832;"></div>
<div style="left:676px;top:73px;width:1px;height:866px;background:#262832;"></div>
<div style="left:870px;top:73px;width:1px;height:866px;background:#262832;"></div>
<div style="left:1064px;top:73px;width:1px;height:866px;background:#262832;"></div>
<div style="left:1259px;top:73px;width:1px;height:866px;background:#262832;"></div>
<div style="left:1453px;top:73px;width:1px;height:866px;background:#262832;"></div>
<div style="left:1648px;top:73px;width:1px;height:866px;background:#262832;"></div>
<div style="left:1842px;top:73px;width:1px;height:866px;background:#262832;"></div>
<div style="left:302px;top:152px;width:1617px;height:1px;background:#262832;"></div>
<div style="left:302px;top:346px;width:1617px;height:1px;background:#262832;"></div>
<div style="left:302px;top:541px;width:1617px;height:1px;background:#262832;"></div>
<div style="left:302px;top:929px;width:1617px;height:1px;background:#262832;"></div>
<div style="left:302px;top:734px;width:1617px;height:1px;background:#43487c;"></div>
<div style="left:302px;top:735px;width:1617px;height:1px;background:#2a2d48;"></div>
<div style="left:302px;top:48px;width:1617px;height:25px;background:#63646a;"></div>
<div style="left:303px;top:49px;width:1615px;height:23px;background:#383a46;"></div>
<div style="left:304px;top:50px;width:21px;height:21px;background:#383a46;box-shadow:inset 0 0 0 1px #686a70;"></div>
<svg style="left:304px;top:50px;" width="21" height="21" viewBox="0 0 21 21"><path d="M5 8.7 H16 L10.5 14.2 Z" fill="#aab4c6"/></svg>
<div style="left:327px;top:50px;width:21px;height:21px;background:#383a46;box-shadow:inset 0 0 0 1px #686a70;"></div>
<svg style="left:327px;top:50px;" width="21" height="21" viewBox="0 0 21 21"><rect x="6" y="6" width="9.3" height="9" fill="#aab4c6"/></svg>
<div style="left:350px;top:50px;width:21px;height:21px;background:#383a46;box-shadow:inset 0 0 0 1px #686a70;"></div>
<svg style="left:350px;top:50px;" width="21" height="21" viewBox="0 0 21 21"><path d="M5 10.5 L10 5.8 V8.5 H16.3 V12.5 H10 V15.2 Z" fill="none" stroke="#aab4c6" stroke-width="1.1"/></svg>
<div style="left:373px;top:50px;width:21px;height:21px;background:#383a46;box-shadow:inset 0 0 0 1px #686a70;"></div>
<svg style="left:373px;top:50px;" width="21" height="21" viewBox="0 0 21 21"><path d="M16 10.5 L11 5.8 V8.5 H4.7 V12.5 H11 V15.2 Z" fill="none" stroke="#5d6370" stroke-width="1.1"/></svg>
<div style="left:396px;top:50px;width:21px;height:21px;background:#383a46;box-shadow:inset 0 0 0 1px #686a70;"></div>
<svg style="left:396px;top:50px;" width="21" height="21" viewBox="0 0 21 21"><path d="M10.5 4.5 V16 M5 10.3 H16" stroke="#aab4c6" stroke-width="1.3" fill="none"/></svg>
<div style="left:419px;top:50px;width:21px;height:21px;background:#383a46;box-shadow:inset 0 0 0 1px #686a70;"></div>
<svg style="left:419px;top:50px;" width="21" height="21" viewBox="0 0 21 21"><path d="M10.5 4 L12.1 8.6 L16.8 8.7 L13 11.6 L14.4 16.2 L10.5 13.4 L6.6 16.2 L8 11.6 L4.2 8.7 L8.9 8.6 Z" fill="#aab4c6"/></svg>
<div style="left:442px;top:50px;width:21px;height:21px;background:#383a46;box-shadow:inset 0 0 0 1px #686a70;"></div>
<svg style="left:442px;top:50px;" width="21" height="21" viewBox="0 0 21 21"><path d="M4.5 11 L10.5 5 L16.5 11 M14 7.5 V5.2 H15 V8.5" fill="none" stroke="#7f8796" stroke-width="1"/><path d="M6 11 V16.5 H15 V11" fill="none" stroke="#7f8796" stroke-width="1"/><rect x="8" y="12" width="2.2" height="4.5" fill="#aab4c6"/><rect x="11.3" y="12" width="2.8" height="2.6" fill="#aab4c6"/></svg>
<span class="t" style="left:466.50px;top:52.50px;font-size:13px;line-height:17px;color:#abb4c5;letter-spacing:1.83px;">/</span>
<span class="t" style="left:477.00px;top:52.50px;font-size:13px;line-height:17px;color:#abb4c5;letter-spacing:0.4px;">project1</span>
<span class="t" style="left:531.00px;top:52.50px;font-size:13px;line-height:17px;color:#abb4c5;letter-spacing:1.83px;">/</span>
<span class="t" style="left:541.30px;top:52.50px;font-size:13px;line-height:17px;color:#abb4c5;letter-spacing:2.46px;">&gt;&gt;</span>
<div style="left:1851px;top:50px;width:21px;height:21px;background:#383a46;box-shadow:inset 0 0 0 1px #686a70;"></div>
<span class="t" style="left:1857.88px;top:52.00px;font-size:13px;line-height:17px;color:#abb4c5;letter-spacing:0.4px;">0</span>
<div style="left:1874px;top:50px;width:21px;height:21px;background:#383a46;box-shadow:inset 0 0 0 1px #686a70;"></div>
<svg style="left:1874px;top:50px;" width="21" height="21" viewBox="0 0 21 21"><rect x="5" y="6.5" width="10.5" height="8.5" fill="none" stroke="#aab4c6" stroke-width="1"/><rect x="5" y="6" width="10.5" height="1.6" fill="#aab4c6"/></svg>
<div style="left:1897px;top:50px;width:21px;height:21px;background:#383a46;box-shadow:inset 0 0 0 1px #686a70;"></div>
<svg style="left:1897px;top:50px;" width="21" height="21" viewBox="0 0 21 21"><path d="M10.5 16 L5.8 11 H8.5 V4.8 H12.5 V11 H15.2 Z" fill="none" stroke="#aab4c6" stroke-width="1.1"/></svg>
<div style="left:424px;top:182.3px;width:329.1px;height:270.7px;background:#00ee00;"></div>
<div style="left:426.5px;top:184.8px;width:324.5px;height:265.8px;background:#144a1b;"></div>
<div style="left:431.3px;top:190.2px;width:314.7px;height:254.4px;background:#1d1e23;"></div>
<div style="left:433px;top:191px;width:153px;height:11px;background:#2b2b2b;box-shadow:inset 0 0 0 1px #3b3c40;"></div>
<div style="left:593px;top:191px;width:151px;height:11px;background:#2b2b2b;box-shadow:inset 0 0 0 1px #3b3c40;"></div>
<div style="left:433px;top:415px;width:153px;height:10px;background:#2b2b2b;box-shadow:inset 0 0 0 1px #3b3c40;"></div>
<div style="left:593px;top:415px;width:151px;height:10px;background:#2b2b2b;box-shadow:inset 0 0 0 1px #3b3c40;"></div>
<div style="left:433px;top:202px;width:11px;height:213px;background:#969696;"></div>
<div style="left:733px;top:202px;width:11px;height:213px;background:#939393;"></div>
<div style="left:444px;top:202px;width:23px;height:213px;background:#2b2b2b;"></div>
<div style="left:444px;top:225px;width:23px;height:1px;background:#3d3e42;"></div>
<div style="left:444px;top:249px;width:23px;height:1px;background:#3d3e42;"></div>
<div style="left:444px;top:272px;width:23px;height:1px;background:#3d3e42;"></div>
<div style="left:444px;top:296px;width:23px;height:1px;background:#3d3e42;"></div>
<div style="left:467px;top:202px;width:266px;height:213px;background:#646464;"></div>
<div style="left:467px;top:202px;width:266px;height:2px;background:#8a8a8a;"></div>
<div style="left:467px;top:413px;width:266px;height:2px;background:#9c9c9c;"></div>
<div style="left:472px;top:207px;width:257px;height:203px;background:#16171a;"></div>
<div style="left:472px;top:212px;width:257px;height:193px;background:#000;"></div>
<svg style="left:444px;top:203px;" width="23" height="22" viewBox="0 0 23 22"><circle cx="11" cy="11.5" r="5.6" fill="none" stroke="#9a9a9a" stroke-width="1.7"/><circle cx="11" cy="11.5" r="2.7" fill="#9a9a9a"/></svg>
<svg style="left:444px;top:226px;" width="23" height="22" viewBox="0 0 23 22"><path d="M4.2 19.3 L10.6 8.4 L13 11.6 L17.9 4.9 L14.4 16.6 L11.6 13.4 Z" fill="#9a9a9a"/></svg>
<svg style="left:444px;top:250px;" width="23" height="22" viewBox="0 0 23 22"><path d="M6 6.5 L16 17 M16 6.5 L6 17" stroke="#9a9a9a" stroke-width="2.6" fill="none"/></svg>
<svg style="left:444px;top:273px;" width="23" height="22" viewBox="0 0 23 22"><circle cx="9.6" cy="15.6" r="4.1" fill="#9a9a9a"/><path d="M11.6 12.5 V10.5 Q11.6 8 14.4 8 Q17.2 8 17.2 10.5 V12.6" fill="none" stroke="#9a9a9a" stroke-width="1.7"/></svg>
<div style="left:433px;top:426px;width:292px;height:18px;background:#27282b;box-shadow:inset 0 0 0 1px #6e6f72;"></div>
<span class="t" style="left:436.50px;top:427.50px;font-size:13px;line-height:17px;color:#d2d2d2;letter-spacing:0.03px;font-family:'Liberation Mono',monospace;">container1</span>
<div style="left:726px;top:426px;width:18px;height:18px;background:#27282b;box-shadow:inset 0 0 0 1px #5d5e62;"></div>
<svg style="left:726px;top:426px;" width="18" height="18" viewBox="0 0 18 18"><path d="M9 2.5 Q9.6 7.6 15.5 9 Q9.6 10.4 9 15.5 Q8.4 10.4 2.5 9 Q8.4 7.6 9 2.5 Z" fill="#4f5053"/></svg>
<div style="left:919px;top:192px;width:311px;height:232px;background:#18191a;"></div>
<div style="left:919px;top:220.5px;width:311px;height:175px;background-color:#333333;background-image:conic-gradient(#333333 25%,#484848 0 50%,#333333 0 75%,#484848 0);background-size:19.4375px 10.9375px;"></div>
<div style="left:919px;top:426px;width:292px;height:18px;background:#27282b;box-shadow:inset 0 0 0 1px #8c8d90;"></div>
<span class="t" style="left:922.50px;top:427.50px;font-size:13px;line-height:17px;color:#d2d2d2;letter-spacing:0.03px;font-family:'Liberation Mono',monospace;">sceneChanger</span>
<div style="left:1212px;top:426px;width:18px;height:18px;background:#27282b;box-shadow:inset 0 0 0 1px #8c8d90;"></div>
<svg style="left:1212px;top:426px;" width="18" height="18" viewBox="0 0 18 18"><path d="M9 2.5 Q9.6 7.6 15.5 9 Q9.6 10.4 9 15.5 Q8.4 10.4 2.5 9 Q8.4 7.6 9 2.5 Z" fill="#f4f4f4"/></svg>
<svg style="left:1010px;top:230px" width="160" height="145" viewBox="1010 230 160 145">
<defs><linearGradient id="bn" gradientUnits="userSpaceOnUse" x1="1017" y1="290" x2="1162" y2="345"><stop offset="0" stop-color="#eec247"/><stop offset="0.12" stop-color="#e3b03a"/><stop offset="0.45" stop-color="#d6a030"/><stop offset="0.8" stop-color="#d19a3a"/><stop offset="1" stop-color="#c88a4a"/></linearGradient>
<radialGradient id="bn3" gradientUnits="userSpaceOnUse" cx="1142" cy="346" r="24"><stop offset="0" stop-color="#d9956a" stop-opacity=".75"/><stop offset="1" stop-color="#d9956a" stop-opacity="0"/></radialGradient>
<clipPath id="bc"><path d="M1038.4 237.6 C1039.7 236.8 1044.2 236.5 1045.8 237.0 C1047.3 237.4 1047.4 238.8 1047.6 240.4 C1047.9 241.9 1047.6 244.8 1047.3 246.5 C1047.0 248.2 1046.5 248.0 1046.1 250.3 C1045.6 252.6 1045.2 256.9 1044.5 260.3 C1043.9 263.8 1042.7 268.3 1042.2 271.1 C1041.8 273.9 1041.6 275.7 1041.8 277.2 C1041.9 278.8 1042.0 278.0 1043.0 280.3 C1044.0 282.6 1045.8 287.2 1047.6 291.0 C1049.4 294.9 1051.5 299.5 1053.8 303.3 C1056.1 307.2 1058.4 310.8 1061.4 314.1 C1064.5 317.4 1068.1 320.5 1072.2 323.3 C1076.3 326.1 1081.4 329.1 1086.0 331.0 C1090.6 332.9 1095.0 334.2 1099.8 334.8 C1104.7 335.5 1110.1 335.2 1115.2 334.8 C1120.3 334.4 1125.4 333.3 1130.5 332.5 C1135.7 331.7 1141.8 330.6 1145.9 329.9 C1150.0 329.2 1152.8 328.0 1155.1 328.2 C1157.4 328.4 1158.6 329.7 1159.7 331.0 C1160.9 332.2 1161.9 334.0 1162.0 335.6 C1162.2 337.1 1161.9 337.9 1160.5 340.2 C1159.1 342.5 1156.5 346.3 1153.6 349.4 C1150.6 352.5 1146.9 356.1 1142.8 358.6 C1138.7 361.2 1133.9 363.2 1129.0 364.8 C1124.1 366.3 1118.8 367.4 1113.7 368.1 C1108.5 368.9 1103.4 369.2 1098.3 369.1 C1093.2 368.9 1087.8 368.3 1082.9 367.1 C1078.1 365.8 1073.5 363.9 1069.1 361.7 C1064.8 359.5 1060.9 357.1 1056.8 354.0 C1052.7 350.9 1048.4 347.1 1044.5 343.3 C1040.7 339.4 1037.1 335.1 1033.8 331.0 C1030.5 326.9 1027.0 322.5 1024.6 318.7 C1022.1 314.8 1020.4 311.3 1019.2 307.9 C1018.0 304.6 1017.3 301.5 1017.2 298.7 C1017.1 295.9 1017.6 293.6 1018.4 291.0 C1019.3 288.5 1020.7 285.8 1022.3 283.4 C1023.8 280.9 1025.9 278.9 1027.6 276.5 C1029.4 274.0 1031.5 271.7 1033.0 268.8 C1034.6 265.8 1036.0 262.0 1036.9 258.8 C1037.8 255.6 1038.2 252.4 1038.4 249.6 C1038.6 246.8 1038.1 243.9 1038.1 241.9 C1038.1 239.9 1037.1 238.4 1038.4 237.6 Z"/></clipPath><filter id="bb"><feGaussianBlur stdDeviation="2.2"/></filter></defs>
<path d="M1038.4 237.6 C1039.7 236.8 1044.2 236.5 1045.8 237.0 C1047.3 237.4 1047.4 238.8 1047.6 240.4 C1047.9 241.9 1047.6 244.8 1047.3 246.5 C1047.0 248.2 1046.5 248.0 1046.1 250.3 C1045.6 252.6 1045.2 256.9 1044.5 260.3 C1043.9 263.8 1042.7 268.3 1042.2 271.1 C1041.8 273.9 1041.6 275.7 1041.8 277.2 C1041.9 278.8 1042.0 278.0 1043.0 280.3 C1044.0 282.6 1045.8 287.2 1047.6 291.0 C1049.4 294.9 1051.5 299.5 1053.8 303.3 C1056.1 307.2 1058.4 310.8 1061.4 314.1 C1064.5 317.4 1068.1 320.5 1072.2 323.3 C1076.3 326.1 1081.4 329.1 1086.0 331.0 C1090.6 332.9 1095.0 334.2 1099.8 334.8 C1104.7 335.5 1110.1 335.2 1115.2 334.8 C1120.3 334.4 1125.4 333.3 1130.5 332.5 C1135.7 331.7 1141.8 330.6 1145.9 329.9 C1150.0 329.2 1152.8 328.0 1155.1 328.2 C1157.4 328.4 1158.6 329.7 1159.7 331.0 C1160.9 332.2 1161.9 334.0 1162.0 335.6 C1162.2 337.1 1161.9 337.9 1160.5 340.2 C1159.1 342.5 1156.5 346.3 1153.6 349.4 C1150.6 352.5 1146.9 356.1 1142.8 358.6 C1138.7 361.2 1133.9 363.2 1129.0 364.8 C1124.1 366.3 1118.8 367.4 1113.7 368.1 C1108.5 368.9 1103.4 369.2 1098.3 369.1 C1093.2 368.9 1087.8 368.3 1082.9 367.1 C1078.1 365.8 1073.5 363.9 1069.1 361.7 C1064.8 359.5 1060.9 357.1 1056.8 354.0 C1052.7 350.9 1048.4 347.1 1044.5 343.3 C1040.7 339.4 1037.1 335.1 1033.8 331.0 C1030.5 326.9 1027.0 322.5 1024.6 318.7 C1022.1 314.8 1020.4 311.3 1019.2 307.9 C1018.0 304.6 1017.3 301.5 1017.2 298.7 C1017.1 295.9 1017.6 293.6 1018.4 291.0 C1019.3 288.5 1020.7 285.8 1022.3 283.4 C1023.8 280.9 1025.9 278.9 1027.6 276.5 C1029.4 274.0 1031.5 271.7 1033.0 268.8 C1034.6 265.8 1036.0 262.0 1036.9 258.8 C1037.8 255.6 1038.2 252.4 1038.4 249.6 C1038.6 246.8 1038.1 243.9 1038.1 241.9 C1038.1 239.9 1037.1 238.4 1038.4 237.6 Z" fill="url(#bn)"/>
<g clip-path="url(#bc)">
<path d="M1041 278 Q1052 306 1072 324 Q1096 338 1130 334 L1158 328 L1160 322 L1100 326 L1060 300 L1046 270 Z" fill="#b98522" opacity=".55" filter="url(#bb)"/>
<path d="M1014 300 Q1018 325 1046 350 Q1075 374 1110 373 Q1135 371 1150 360 L1146 356 Q1130 365 1108 365.5 Q1078 364 1052 343 Q1030 322 1024 296 Q1024 286 1030 276 L1020 278 Z" fill="#f6d463" opacity=".6" filter="url(#bb)"/>
<rect x="1115" y="320" width="50" height="55" fill="url(#bn3)"/>
<path d="M1037 236 H1049 V251 L1037 250 Z" fill="#cfae55" opacity=".8"/><path d="M1044 252 Q1043 266 1041 278 L1046 280 L1049 250 Z" fill="#b88a24" opacity=".5"/>
<path d="M1153 326 L1164 334 L1161 344 Q1160 334 1153 326 Z" fill="#a8682a" opacity=".8"/>
<rect x="1054.5" y="329" width="3.5" height="2" fill="#c4673f" opacity=".8"/><rect x="1136" y="334" width="4" height="1.4" fill="#9a5a2a" opacity=".8"/>
</g></svg>
<div style="left:919px;top:571px;width:311px;height:232px;background:#18191a;"></div>
<div style="left:919px;top:599.5px;width:311px;height:175px;background:#636363;"></div>
<div style="left:919px;top:599.5px;width:103.5px;height:175px;background:#52798b;"></div>
<div style="left:1126px;top:599.5px;width:1px;height:175px;background:#4f4f4f;"></div>
<div style="left:960px;top:685.4px;width:22px;height:1.2px;background:#aec2cc;opacity:.8;"></div>
<div style="left:1063px;top:685.4px;width:23px;height:1.2px;background:#505050;opacity:.8;"></div>
<div style="left:1167px;top:685.4px;width:23px;height:1.2px;background:#505050;opacity:.8;"></div>
<div style="left:919px;top:805px;width:292px;height:18px;background:#27282b;box-shadow:inset 0 0 0 1px #8c8d90;"></div>
<span class="t" style="left:922.50px;top:806.50px;font-size:13px;line-height:17px;color:#d2d2d2;letter-spacing:0.03px;font-family:'Liberation Mono',monospace;">sceneChangerUi</span>
<div style="left:1212px;top:805px;width:18px;height:18px;background:#27282b;box-shadow:inset 0 0 0 1px #8c8d90;"></div>
<svg style="left:1212px;top:805px;" width="18" height="18" viewBox="0 0 18 18"><path d="M9 2.5 Q9.6 7.6 15.5 9 Q9.6 10.4 9 15.5 Q8.4 10.4 2.5 9 Q8.4 7.6 9 2.5 Z" fill="#f4f4f4"/></svg>
<svg style="left:728px;top:312px;" width="200" height="14" viewBox="0 0 200 14"><path d="M26 6 H191" stroke="#5f7286" stroke-width="2" stroke-dasharray="2.1 1.86" fill="none"/><path d="M2.2 6 H26" stroke="#8fa0b0" stroke-opacity=".35" stroke-width="2" stroke-dasharray="2.1 1.86" stroke-dashoffset="0.2" fill="none"/><path d="M91 1 L101.5 6 L91 11 Z" fill="#586c80"/></svg>
<svg style="left:1067px;top:424px;" width="14" height="150" viewBox="0 0 14 150"><path d="M7 1.5 V146.5" stroke="#5f7286" stroke-width="2" stroke-dasharray="2.1 1.86" fill="none"/><path d="M2 65.4 H12 L7 75.6 Z" fill="#586c80"/></svg>
<svg style="left:1245px;top:650px;" width="14" height="20" viewBox="0 0 14 20"><path d="M0.9 0.9 V16.4 L4.7 13.3 L7.5 18.6 L9.5 17.5 L7 12.1 L11.4 11.7 Z" fill="#fff" stroke="#000" stroke-width="1.1" stroke-linejoin="round"/></svg>
<div style="left:1430px;top:73px;width:489px;height:669px;background:#404040;"></div>
<div style="left:1430px;top:73px;width:489px;height:48px;background:#252525;"></div>
<span class="t" style="left:1434.30px;top:79.30px;font-size:11.5px;line-height:16px;color:#ececec;letter-spacing:0.49px;font-weight:bold;">Container</span>
<div style="left:1499px;top:77px;width:1417px;height:20px;background:#2b2b2b;width:417px;"></div>
<span class="t" style="left:1502.00px;top:80.50px;font-size:12.6px;line-height:17px;color:#dcdcdc;letter-spacing:0.03px;font-family:'Liberation Mono',monospace;">container1</span>
<span class="t" style="left:1435.00px;top:100.00px;font-size:16px;line-height:20px;color:#e6e6e6;letter-spacing:-1.07px;font-weight:bold;">?</span>
<svg style="left:1453px;top:100px" width="18" height="18" viewBox="0 0 18 18"><rect width="18" height="18" fill="#f6d255"/><path d="M0 0 H18 V8 Q13 9 9 10.5 Q4 12.5 0 11 Z" fill="#3d7cc0"/><text x="9.3" y="15.6" text-anchor="middle" font-family="Liberation Sans" font-weight="bold" font-size="17.5" fill="#fff" stroke="#151515" stroke-width="2" stroke-linejoin="round" paint-order="stroke">?</text></svg>
<div style="left:1481.5px;top:107px;width:5px;height:9.5px;background:#e6e6e6;"></div>
<div style="left:1481.5px;top:102px;width:5px;height:3.3px;background:#e6e6e6;"></div>
<svg style="left:1788px;top:100px;" width="18" height="18" viewBox="0 0 18 18"><path d="M2 15.3 L2.2 11.2 L11.6 2 L15.4 5.6 L6 14.9 Z" fill="#7b7b7b"/><path d="M5.2 11.6 L12.2 4.8" stroke="#2a2a2a" stroke-width="1.1"/></svg>
<svg style="left:1808px;top:102px;" width="20" height="16" viewBox="0 0 20 16"><ellipse cx="9.8" cy="6.2" rx="8.6" ry="4.4" fill="#808080"/><path d="M3.4 8.6 L2.3 12.8 L7.6 10 Z" fill="#808080"/></svg>
<svg style="left:1829px;top:99px;" width="22" height="20" viewBox="0 0 22 20"><path d="M2.2 14.4 L8.7 4.1 L19.5 8.7 L13 17.7 Z" fill="#262626" stroke="#f4f4f4" stroke-width="1.4" stroke-linejoin="round"/><path d="M9.6 6.2 L13.7 2.1 L17.8 6.2 L17 8 L10.5 5.5 Z" fill="#f4f4f4"/><circle cx="13.7" cy="4.3" r=".8" fill="#333"/></svg>
<svg style="left:1853.6px;top:100.4px" width="17.6" height="17.6" viewBox="0 0 18 18"><circle cx="9" cy="9" r="9" fill="#f6f6f6"/><path d="M8.8 2.2 Q5.8 2.2 5.8 4.2 V6 H9.2 V6.8 H4.2 Q2.2 6.8 2.2 9.3 Q2.2 11.8 4.2 11.8 H5.4 V10 Q5.4 8.2 7.4 8.2 H10.6 Q12.2 8.2 12.2 6.6 V4.2 Q12.2 2.2 8.8 2.2 Z" fill="#3b77b4"/><path d="M9.2 15.8 Q12.2 15.8 12.2 13.8 V12 H8.8 V11.2 H13.8 Q15.8 11.2 15.8 8.7 Q15.8 6.2 13.8 6.2 H12.6 V8 Q12.6 9.8 10.6 9.8 H7.4 Q5.8 9.8 5.8 11.4 V13.8 Q5.8 15.8 9.2 15.8 Z" fill="#f4cb48"/><circle cx="7.3" cy="4" r=".6" fill="#f6f6f6"/></svg>
<svg style="left:1876px;top:101px;" width="17" height="17" viewBox="0 0 17 17"><path d="M8.1 1.2 V15 M1 8.1 H15.2" stroke="#f2f2f2" stroke-width="2.9" fill="none"/></svg>
<svg style="left:1897px;top:100px;" width="19" height="19" viewBox="0 0 19 19"><circle cx="9.2" cy="9.3" r="7.7" fill="none" stroke="#f2f2f2" stroke-width="1.7"/><circle cx="9.2" cy="9.3" r="4.3" fill="none" stroke="#f2f2f2" stroke-width="1.7"/><circle cx="9.2" cy="9.3" r="1.5" fill="#f2f2f2"/></svg>
<span class="t" style="left:1440.00px;top:131.00px;font-size:13px;line-height:17px;color:#d6d6d6;letter-spacing:0.29px;">Layout</span>
<span class="t" style="left:1492.00px;top:131.00px;font-size:13px;line-height:17px;color:#cfcfcf;letter-spacing:-0.18px;">Panel</span>
<span class="t" style="left:1536.00px;top:131.00px;font-size:13px;line-height:17px;color:#cfcfcf;letter-spacing:-0.02px;">Look</span>
<span class="t" style="left:1575.50px;top:131.00px;font-size:13px;line-height:17px;color:#cfcfcf;letter-spacing:0.21px;">Children</span>
<span class="t" style="left:1637.00px;top:131.00px;font-size:13px;line-height:17px;color:#cfcfcf;letter-spacing:0.43px;">Drag/Drop</span>
<span class="t" style="left:1712.00px;top:131.00px;font-size:13px;line-height:17px;color:#cfcfcf;letter-spacing:0.16px;">Extensions</span>
<span class="t" style="left:1788.00px;top:131.00px;font-size:13px;line-height:17px;color:#cfcfcf;letter-spacing:0.22px;">Common</span>
<div style="left:1434px;top:151px;width:1481px;height:1px;background:#b9b9b9;width:481px;"></div>
<div style="left:1434px;top:149px;width:52px;height:3px;background:#e4e4e4;"></div>
<span class="t" style="left:1602.33px;top:158.50px;font-size:13px;line-height:17px;color:#d3d3d3;letter-spacing:-0.45px;">X</span>
<div style="left:1615px;top:157px;width:50px;height:20px;background:#555555;"></div>
<span class="t" style="left:1618.00px;top:158.50px;font-size:13px;line-height:17px;color:#d7d7d7;letter-spacing:0.4px;">0</span>
<div style="left:1667px;top:166px;width:249px;height:2px;background:#2c2c2c;"></div>
<div style="left:1668px;top:159px;width:10px;height:16px;background:#3a3a3a;"></div>
<div style="left:1669px;top:160px;width:8px;height:14px;background:#686868;"></div>
<span class="t" style="left:1602.33px;top:180.50px;font-size:13px;line-height:17px;color:#d3d3d3;letter-spacing:-1.34px;">Y</span>
<div style="left:1615px;top:179px;width:50px;height:20px;background:#555555;"></div>
<span class="t" style="left:1618.00px;top:180.50px;font-size:13px;line-height:17px;color:#d7d7d7;letter-spacing:0.4px;">0</span>
<div style="left:1667px;top:188px;width:249px;height:2px;background:#2c2c2c;"></div>
<div style="left:1668px;top:181px;width:10px;height:16px;background:#3a3a3a;"></div>
<div style="left:1669px;top:182px;width:8px;height:14px;background:#686868;"></div>
<span class="t" style="left:1576.45px;top:202.50px;font-size:13px;line-height:17px;color:#d3d3d3;letter-spacing:0.33px;">Width</span>
<div style="left:1615px;top:201px;width:50px;height:20px;background:#555555;"></div>
<span class="t" style="left:1618.00px;top:202.50px;font-size:13px;line-height:17px;color:#d7d7d7;letter-spacing:0.4px;">400</span>
<div style="left:1667px;top:210px;width:249px;height:2px;background:#2c2c2c;"></div>
<div style="left:1715px;top:203px;width:10px;height:16px;background:#3a3a3a;"></div>
<div style="left:1716px;top:204px;width:8px;height:14px;background:#686868;"></div>
<span class="t" style="left:1571.67px;top:224.50px;font-size:13px;line-height:17px;color:#d3d3d3;letter-spacing:0.35px;">Height</span>
<div style="left:1615px;top:223px;width:50px;height:20px;background:#555555;"></div>
<span class="t" style="left:1618.00px;top:224.50px;font-size:13px;line-height:17px;color:#d7d7d7;letter-spacing:0.4px;">300</span>
<div style="left:1667px;top:232px;width:249px;height:2px;background:#2c2c2c;"></div>
<div style="left:1703px;top:225px;width:10px;height:16px;background:#3a3a3a;"></div>
<div style="left:1704px;top:226px;width:8px;height:14px;background:#686868;"></div>
<span class="t" style="left:1535.03px;top:246.50px;font-size:13px;line-height:17px;color:#d3d3d3;letter-spacing:0.14px;">Fixed Aspect</span>
<div style="left:1615px;top:245px;width:301px;height:19px;background:#5e5e5e;box-shadow:inset 0 0 0 1px #333333;"></div>
<span class="t" style="left:1620.00px;top:246.90px;font-size:13px;line-height:17px;color:#d7d7d7;letter-spacing:0.2px;">Off</span>
<svg style="left:1902px;top:252px;" width="11" height="6" viewBox="0 0 11 6"><path d="M0.6 0.4 H10 L5.3 5.6 Z" fill="#d6d6d6"/></svg>
<span class="t" style="left:1535.42px;top:268.50px;font-size:13px;line-height:17px;color:#6c6c6c;letter-spacing:0.17px;">Aspect Ratio</span>
<span class="t" style="left:1618.00px;top:268.50px;font-size:13px;line-height:17px;color:#6c6c6c;letter-spacing:0.4px;">1</span>
<div style="left:1667px;top:276px;width:249px;height:2px;background:#4a4a4a;"></div>
<div style="left:1787px;top:269px;width:10px;height:16px;background:#4b4b4b;"></div>
<span class="t" style="left:1536.87px;top:290.50px;font-size:13px;line-height:17px;color:#d3d3d3;letter-spacing:0.33px;">Depth Layer</span>
<div style="left:1615px;top:289px;width:50px;height:20px;background:#555555;"></div>
<span class="t" style="left:1618.00px;top:290.50px;font-size:13px;line-height:17px;color:#d7d7d7;letter-spacing:0.4px;">0</span>
<div style="left:1667px;top:298px;width:249px;height:2px;background:#2c2c2c;"></div>
<div style="left:1668px;top:291px;width:10px;height:16px;background:#3a3a3a;"></div>
<div style="left:1669px;top:292px;width:8px;height:14px;background:#686868;"></div>
<span class="t" style="left:1512.84px;top:323.50px;font-size:13px;line-height:17px;color:#d3d3d3;letter-spacing:0.25px;">Horizontal Mode</span>
<div style="left:1615px;top:322px;width:301px;height:19px;background:#5e5e5e;box-shadow:inset 0 0 0 1px #333333;"></div>
<span class="t" style="left:1620.00px;top:323.90px;font-size:13px;line-height:17px;color:#d7d7d7;letter-spacing:0.14px;">Fixed Width</span>
<svg style="left:1902px;top:329px;" width="11" height="6" viewBox="0 0 11 6"><path d="M0.6 0.4 H10 L5.3 5.6 Z" fill="#d6d6d6"/></svg>
<span class="t" style="left:1542.03px;top:345.50px;font-size:13px;line-height:17px;color:#d3d3d3;letter-spacing:0.32px;">Left Anchor</span>
<div style="left:1615px;top:344px;width:50px;height:20px;background:#555555;"></div>
<span class="t" style="left:1618.00px;top:345.50px;font-size:13px;line-height:17px;color:#d7d7d7;letter-spacing:0.4px;">0</span>
<div style="left:1667px;top:353px;width:249px;height:2px;background:#2c2c2c;"></div>
<div style="left:1668px;top:346px;width:10px;height:16px;background:#3a3a3a;"></div>
<div style="left:1669px;top:347px;width:8px;height:14px;background:#686868;"></div>
<span class="t" style="left:1548.46px;top:367.50px;font-size:13px;line-height:17px;color:#6c6c6c;letter-spacing:0.28px;">Left Offset</span>
<span class="t" style="left:1618.00px;top:367.50px;font-size:13px;line-height:17px;color:#6c6c6c;letter-spacing:0.4px;">0</span>
<div style="left:1667px;top:375px;width:249px;height:2px;background:#4a4a4a;"></div>
<div style="left:1787px;top:368px;width:10px;height:16px;background:#4b4b4b;"></div>
<span class="t" style="left:1533.04px;top:389.50px;font-size:13px;line-height:17px;color:#6c6c6c;letter-spacing:0.32px;">Right Anchor</span>
<span class="t" style="left:1618.00px;top:389.50px;font-size:13px;line-height:17px;color:#6c6c6c;letter-spacing:0.4px;">1</span>
<div style="left:1667px;top:397px;width:249px;height:2px;background:#4a4a4a;"></div>
<div style="left:1907px;top:390px;width:10px;height:16px;background:#4b4b4b;"></div>
<span class="t" style="left:1539.40px;top:411.50px;font-size:13px;line-height:17px;color:#6c6c6c;letter-spacing:0.29px;">Right Offset</span>
<span class="t" style="left:1618.00px;top:411.50px;font-size:13px;line-height:17px;color:#6c6c6c;letter-spacing:0.4px;">0</span>
<div style="left:1667px;top:419px;width:249px;height:2px;background:#4a4a4a;"></div>
<div style="left:1787px;top:412px;width:10px;height:16px;background:#4b4b4b;"></div>
<span class="t" style="left:1509.22px;top:433.50px;font-size:13px;line-height:17px;color:#d3d3d3;letter-spacing:0.31px;">Horizontal Origin</span>
<div style="left:1615px;top:432px;width:50px;height:20px;background:#555555;"></div>
<span class="t" style="left:1618.00px;top:433.50px;font-size:13px;line-height:17px;color:#d7d7d7;letter-spacing:0.4px;">0</span>
<div style="left:1667px;top:441px;width:249px;height:2px;background:#2c2c2c;"></div>
<div style="left:1668px;top:434px;width:10px;height:16px;background:#3a3a3a;"></div>
<div style="left:1669px;top:435px;width:8px;height:14px;background:#686868;"></div>
<span class="t" style="left:1483.58px;top:455.50px;font-size:13px;line-height:17px;color:#6c6c6c;letter-spacing:0.23px;">Horizontal Fill Weight</span>
<span class="t" style="left:1618.00px;top:455.50px;font-size:13px;line-height:17px;color:#6c6c6c;letter-spacing:0.4px;">1</span>
<div style="left:1667px;top:463px;width:249px;height:2px;background:#4a4a4a;"></div>
<div style="left:1787px;top:456px;width:10px;height:16px;background:#4b4b4b;"></div>
<span class="t" style="left:1529.23px;top:488.50px;font-size:13px;line-height:17px;color:#d3d3d3;letter-spacing:0.25px;">Vertical Mode</span>
<div style="left:1615px;top:487px;width:301px;height:19px;background:#5e5e5e;box-shadow:inset 0 0 0 1px #333333;"></div>
<span class="t" style="left:1620.00px;top:488.90px;font-size:13px;line-height:17px;color:#d7d7d7;letter-spacing:0.17px;">Fixed Height</span>
<svg style="left:1902px;top:494px;" width="11" height="6" viewBox="0 0 11 6"><path d="M0.6 0.4 H10 L5.3 5.6 Z" fill="#d6d6d6"/></svg>
<span class="t" style="left:1520.69px;top:510.50px;font-size:13px;line-height:17px;color:#d3d3d3;letter-spacing:0.42px;">Bottom Anchor</span>
<div style="left:1615px;top:509px;width:50px;height:20px;background:#555555;"></div>
<span class="t" style="left:1618.00px;top:510.50px;font-size:13px;line-height:17px;color:#d7d7d7;letter-spacing:0.4px;">0</span>
<div style="left:1667px;top:518px;width:249px;height:2px;background:#2c2c2c;"></div>
<div style="left:1668px;top:511px;width:10px;height:16px;background:#3a3a3a;"></div>
<div style="left:1669px;top:512px;width:8px;height:14px;background:#686868;"></div>
<span class="t" style="left:1527.08px;top:532.50px;font-size:13px;line-height:17px;color:#6c6c6c;letter-spacing:0.39px;">Bottom Offset</span>
<span class="t" style="left:1618.00px;top:532.50px;font-size:13px;line-height:17px;color:#6c6c6c;letter-spacing:0.4px;">0</span>
<div style="left:1667px;top:540px;width:249px;height:2px;background:#4a4a4a;"></div>
<div style="left:1787px;top:533px;width:10px;height:16px;background:#4b4b4b;"></div>
<span class="t" style="left:1544.24px;top:554.50px;font-size:13px;line-height:17px;color:#6c6c6c;letter-spacing:0.19px;">Top Anchor</span>
<span class="t" style="left:1618.00px;top:554.50px;font-size:13px;line-height:17px;color:#6c6c6c;letter-spacing:0.4px;">1</span>
<div style="left:1667px;top:562px;width:249px;height:2px;background:#4a4a4a;"></div>
<div style="left:1907px;top:555px;width:10px;height:16px;background:#4b4b4b;"></div>
<span class="t" style="left:1550.63px;top:576.50px;font-size:13px;line-height:17px;color:#6c6c6c;letter-spacing:0.15px;">Top Offset</span>
<span class="t" style="left:1618.00px;top:576.50px;font-size:13px;line-height:17px;color:#6c6c6c;letter-spacing:0.4px;">0</span>
<div style="left:1667px;top:584px;width:249px;height:2px;background:#4a4a4a;"></div>
<div style="left:1787px;top:577px;width:10px;height:16px;background:#4b4b4b;"></div>
<span class="t" style="left:1525.45px;top:598.50px;font-size:13px;line-height:17px;color:#d3d3d3;letter-spacing:0.33px;">Vertical Origin</span>
<div style="left:1615px;top:597px;width:50px;height:20px;background:#555555;"></div>
<span class="t" style="left:1618.00px;top:598.50px;font-size:13px;line-height:17px;color:#d7d7d7;letter-spacing:0.4px;">0</span>
<div style="left:1667px;top:606px;width:249px;height:2px;background:#2c2c2c;"></div>
<div style="left:1668px;top:599px;width:10px;height:16px;background:#3a3a3a;"></div>
<div style="left:1669px;top:600px;width:8px;height:14px;background:#686868;"></div>
<span class="t" style="left:1499.94px;top:620.50px;font-size:13px;line-height:17px;color:#6c6c6c;letter-spacing:0.23px;">Vertical Fill Weight</span>
<span class="t" style="left:1618.00px;top:620.50px;font-size:13px;line-height:17px;color:#6c6c6c;letter-spacing:0.4px;">1</span>
<div style="left:1667px;top:628px;width:249px;height:2px;background:#4a4a4a;"></div>
<div style="left:1787px;top:621px;width:10px;height:16px;background:#4b4b4b;"></div>
<span class="t" style="left:1507.04px;top:653.50px;font-size:13px;line-height:17px;color:#d3d3d3;letter-spacing:0.33px;">Parent Alignment</span>
<div style="left:1615px;top:652px;width:301px;height:19px;background:#5e5e5e;box-shadow:inset 0 0 0 1px #333333;"></div>
<span class="t" style="left:1620.00px;top:653.90px;font-size:13px;line-height:17px;color:#d7d7d7;letter-spacing:0.19px;">Allow</span>
<svg style="left:1902px;top:659px;" width="11" height="6" viewBox="0 0 11 6"><path d="M0.6 0.4 H10 L5.3 5.6 Z" fill="#d6d6d6"/></svg>
<span class="t" style="left:1542.45px;top:675.50px;font-size:13px;line-height:17px;color:#d3d3d3;letter-spacing:0.28px;">Align Order</span>
<div style="left:1615px;top:674px;width:50px;height:20px;background:#555555;"></div>
<span class="t" style="left:1618.00px;top:675.50px;font-size:13px;line-height:17px;color:#d7d7d7;letter-spacing:0.4px;">0</span>
<div style="left:1667px;top:683px;width:249px;height:2px;background:#2c2c2c;"></div>
<div style="left:1668px;top:676px;width:10px;height:16px;background:#3a3a3a;"></div>
<div style="left:1669px;top:677px;width:8px;height:14px;background:#686868;"></div>
<span class="t" style="left:1545.73px;top:697.50px;font-size:13px;line-height:17px;color:#d3d3d3;letter-spacing:0.12px;">Post Offset</span>
<div style="left:1615px;top:696px;width:149.5px;height:20px;background:#555555;"></div>
<div style="left:1766.5px;top:696px;width:149.5px;height:20px;background:#555555;"></div>
<span class="t" style="left:1618.00px;top:697.50px;font-size:13px;line-height:17px;color:#d7d7d7;letter-spacing:0.4px;">0</span>
<span class="t" style="left:1770.00px;top:697.50px;font-size:13px;line-height:17px;color:#d7d7d7;letter-spacing:0.4px;">0</span>
<span class="t" style="left:1502.80px;top:719.50px;font-size:13px;line-height:17px;color:#d3d3d3;letter-spacing:0.23px;">Size from Window</span>
<div style="left:1615px;top:718px;width:50px;height:20px;background:#3d3d3d;box-shadow:inset 0 0 0 1px #343434;"></div>
<div style="left:1641px;top:719px;width:23px;height:18px;background:#5a5d6b;"></div>
<span class="t" style="left:1619.00px;top:719.50px;font-size:13px;line-height:17px;color:#d7d7d7;letter-spacing:0.2px;">Off</span>
<div style="left:1434px;top:315px;width:482px;height:1px;background:#4c4c4c;"></div>
<div style="left:1434px;top:480px;width:482px;height:1px;background:#4c4c4c;"></div>
<div style="left:1434px;top:645px;width:482px;height:1px;background:#4c4c4c;"></div>
<div style="left:302px;top:939px;width:1617px;height:70px;background:#66676b;"></div>
<div style="left:303px;top:940px;width:277px;height:68px;background:#0e0c18;"></div>
<span class="t" style="left:308.00px;top:943.00px;font-size:13px;line-height:17px;color:#878b93;letter-spacing:0.65px;">Start:</span>
<span class="t" style="left:369.00px;top:943.00px;font-size:13px;line-height:17px;color:#70a2f2;letter-spacing:0.4px;">1</span>
<span class="t" style="left:438.00px;top:943.00px;font-size:13px;line-height:17px;color:#878b93;letter-spacing:0.38px;">End:</span>
<span class="t" style="left:498.50px;top:943.00px;font-size:13px;line-height:17px;color:#70a2f2;letter-spacing:0.4px;">600</span>
<span class="t" style="left:308.00px;top:958.40px;font-size:13px;line-height:17px;color:#878b93;letter-spacing:0.41px;">RStart:</span>
<span class="t" style="left:369.00px;top:958.40px;font-size:13px;line-height:17px;color:#70a2f2;letter-spacing:0.4px;">1</span>
<span class="t" style="left:438.00px;top:958.40px;font-size:13px;line-height:17px;color:#878b93;letter-spacing:0.09px;">REnd:</span>
<span class="t" style="left:498.50px;top:958.40px;font-size:13px;line-height:17px;color:#70a2f2;letter-spacing:0.4px;">600</span>
<span class="t" style="left:308.00px;top:973.80px;font-size:13px;line-height:17px;color:#878b93;letter-spacing:-0.42px;">FPS:</span>
<span class="t" style="left:369.00px;top:973.80px;font-size:13px;line-height:17px;color:#70a2f2;letter-spacing:0.49px;">60.0</span>
<span class="t" style="left:438.00px;top:973.80px;font-size:13px;line-height:17px;color:#878b93;letter-spacing:0.36px;">Tempo:</span>
<span class="t" style="left:498.50px;top:973.80px;font-size:13px;line-height:17px;color:#70a2f2;letter-spacing:0.47px;">120.0</span>
<span class="t" style="left:308.00px;top:989.20px;font-size:13px;line-height:17px;color:#878b93;letter-spacing:-0.08px;">ResetF:</span>
<span class="t" style="left:369.00px;top:989.20px;font-size:13px;line-height:17px;color:#70a2f2;letter-spacing:0.4px;">1</span>
<span class="t" style="left:438.00px;top:989.20px;font-size:13px;line-height:17px;color:#878b93;letter-spacing:0.31px;">T Sig:</span>
<span class="t" style="left:498.50px;top:989.20px;font-size:13px;line-height:17px;color:#70a2f2;letter-spacing:0.4px;">4</span>
<span class="t" style="left:533.50px;top:989.20px;font-size:13px;line-height:17px;color:#70a2f2;letter-spacing:0.4px;">4</span>
<div style="left:581px;top:940px;width:1337px;height:13px;background:#0e0e0e;"></div>
<div style="left:692px;top:940px;width:1px;height:13px;background:#77787b;"></div>
<div style="left:803px;top:940px;width:1px;height:13px;background:#77787b;"></div>
<div style="left:915px;top:940px;width:1px;height:13px;background:#77787b;"></div>
<div style="left:1027px;top:940px;width:1px;height:13px;background:#77787b;"></div>
<div style="left:1138px;top:940px;width:1px;height:13px;background:#77787b;"></div>
<div style="left:1250px;top:940px;width:1px;height:13px;background:#77787b;"></div>
<div style="left:1362px;top:940px;width:1px;height:13px;background:#77787b;"></div>
<div style="left:1473px;top:940px;width:1px;height:13px;background:#77787b;"></div>
<div style="left:1585px;top:940px;width:1px;height:13px;background:#77787b;"></div>
<div style="left:1697px;top:940px;width:1px;height:13px;background:#77787b;"></div>
<div style="left:1808px;top:940px;width:1px;height:13px;background:#77787b;"></div>
<span class="t" style="left:582.00px;top:938.00px;font-size:11px;line-height:15px;color:#a4a4a4;letter-spacing:0.37px;">1</span>
<span class="t" style="left:694.00px;top:938.00px;font-size:11px;line-height:15px;color:#a4a4a4;letter-spacing:0.37px;">51</span>
<span class="t" style="left:805.00px;top:938.00px;font-size:11px;line-height:15px;color:#a4a4a4;letter-spacing:0.37px;">101</span>
<span class="t" style="left:917.00px;top:938.00px;font-size:11px;line-height:15px;color:#a4a4a4;letter-spacing:0.37px;">151</span>
<span class="t" style="left:1029.00px;top:938.00px;font-size:11px;line-height:15px;color:#a4a4a4;letter-spacing:0.37px;">201</span>
<span class="t" style="left:1140.00px;top:938.00px;font-size:11px;line-height:15px;color:#a4a4a4;letter-spacing:0.37px;">251</span>
<span class="t" style="left:1252.00px;top:938.00px;font-size:11px;line-height:15px;color:#a4a4a4;letter-spacing:0.37px;">301</span>
<span class="t" style="left:1364.00px;top:938.00px;font-size:11px;line-height:15px;color:#a4a4a4;letter-spacing:0.37px;">351</span>
<span class="t" style="left:1475.00px;top:938.00px;font-size:11px;line-height:15px;color:#a4a4a4;letter-spacing:0.37px;">401</span>
<span class="t" style="left:1587.00px;top:938.00px;font-size:11px;line-height:15px;color:#a4a4a4;letter-spacing:0.37px;">451</span>
<span class="t" style="left:1699.00px;top:938.00px;font-size:11px;line-height:15px;color:#a4a4a4;letter-spacing:0.37px;">501</span>
<span class="t" style="left:1810.00px;top:938.00px;font-size:11px;line-height:15px;color:#a4a4a4;letter-spacing:0.37px;">551</span>
<span class="t" style="left:1896.91px;top:938.00px;font-size:11px;line-height:15px;color:#a4a4a4;letter-spacing:0.37px;">600</span>
<div style="left:1511.5px;top:940px;width:2px;height:13px;background:#7aa2e6;"></div>
<div style="left:581px;top:954px;width:1337px;height:10px;background:#0e0e0e;"></div>
<div style="left:604px;top:955px;width:1290px;height:8px;background:#394969;"></div>
<div style="left:582px;top:955px;width:21px;height:8px;background:#4b4b4b;box-shadow:inset 0 0 0 1px #7c7c7c;"></div>
<span class="t" style="left:588.75px;top:951.50px;font-size:9px;line-height:13px;color:#8a8a8a;">...</span>
<div style="left:1894px;top:955px;width:21px;height:8px;background:#4b4b4b;box-shadow:inset 0 0 0 1px #7c7c7c;"></div>
<span class="t" style="left:1900.75px;top:951.50px;font-size:9px;line-height:13px;color:#8a8a8a;">...</span>
<div style="left:581px;top:965px;width:1337px;height:43px;background:#303134;"></div>
<div style="left:584px;top:967px;width:20px;height:19px;background:#383a46;box-shadow:inset 0 0 0 1px #67686d;"></div>
<span class="t" style="left:592.19px;top:968.50px;font-size:13px;line-height:17px;color:#80848e;letter-spacing:1.83px;">/</span>
<div style="left:584px;top:986px;width:20px;height:19px;background:#383a46;box-shadow:inset 0 0 0 1px #67686d;"></div>
<span class="t" style="left:592.19px;top:987.50px;font-size:13px;line-height:17px;color:#80848e;font-family:'Liberation Serif',serif;">I</span>
<div style="left:607px;top:967px;width:68px;height:18px;background:#2a2b2f;box-shadow:inset 0 0 0 1px #67686d;"></div>
<div style="left:609px;top:969px;width:64px;height:14px;background:#d08a4c;"></div>
<span class="t" style="left:610.98px;top:968.00px;font-size:13px;line-height:17px;color:#5a1f10;letter-spacing:0.08px;">TimeCode</span>
<div style="left:607px;top:986px;width:68px;height:19px;background:#383a46;box-shadow:inset 0 0 0 1px #67686d;"></div>
<span class="t" style="left:624.10px;top:987.50px;font-size:13px;line-height:17px;color:#a9b3c4;letter-spacing:0.14px;">Beats</span>
<div style="left:677px;top:967px;width:200px;height:39px;background:#000;box-shadow:inset 0 0 0 1px #55565a;"></div>
<span class="t" style="left:698.83px;top:973.50px;font-size:27px;line-height:31px;color:#74a6f4;letter-spacing:1.45px;">00:00:06:57</span>
<div style="left:879px;top:967px;width:135px;height:39px;background:#000;box-shadow:inset 0 0 0 1px #55565a;"></div>
<span class="t" style="left:922.75px;top:973.50px;font-size:27px;line-height:31px;color:#74a6f4;letter-spacing:1.53px;">418</span>
<div style="left:1016px;top:967px;width:39px;height:38px;background:#383a46;box-shadow:inset 0 0 0 1px #67686d;"></div>
<svg style="left:1016px;top:967px;" width="39" height="38" viewBox="0 0 39 38"><rect x="13.5" y="14" width="1.6" height="10" fill="#aab6c8"/><path d="M20 14 V24 L14.8 19 Z M25.5 14 V24 L20.3 19 Z" fill="#aab6c8"/></svg>
<div style="left:1057px;top:967px;width:39px;height:38px;background:#383a46;box-shadow:inset 0 0 0 1px #67686d;"></div>
<svg style="left:1057px;top:967px;" width="39" height="38" viewBox="0 0 39 38"><rect x="16" y="14" width="2.3" height="10" fill="#aab6c8"/><rect x="20.6" y="14" width="2.3" height="10" fill="#aab6c8"/></svg>
<div style="left:1098px;top:967px;width:39px;height:38px;background:#383a46;box-shadow:inset 0 0 0 1px #67686d;"></div>
<svg style="left:1098px;top:967px;" width="39" height="38" viewBox="0 0 39 38"><path d="M21.5 13.7 V24.3 L15.8 19 Z" fill="#aab6c8"/></svg>
<div style="left:1139px;top:967px;width:39px;height:38px;background:#c4864b;"></div>
<svg style="left:1139px;top:967px;" width="39" height="38" viewBox="0 0 39 38"><path d="M17.3 13.7 V24.3 L23 19 Z" fill="#4a2a22"/></svg>
<div style="left:1180px;top:967px;width:39px;height:38px;background:#383a46;box-shadow:inset 0 0 0 1px #67686d;"></div>
<svg style="left:1180px;top:967px;" width="39" height="38" viewBox="0 0 39 38"><rect x="17.3" y="18.6" width="4.6" height="1.2" fill="#aab6c8"/></svg>
<div style="left:1221px;top:967px;width:39px;height:38px;background:#383a46;box-shadow:inset 0 0 0 1px #67686d;"></div>
<svg style="left:1221px;top:967px;" width="39" height="38" viewBox="0 0 39 38"><path d="M19.5 14.5 V23.7 M14.9 19.1 H24.1" stroke="#aab6c8" stroke-width="1.1" fill="none"/></svg>
<span class="t" style="left:1265.00px;top:967.00px;font-size:13px;line-height:17px;color:#abb4c5;letter-spacing:0.24px;">Range Limit</span>
<div style="left:1263px;top:988px;width:52px;height:18px;background:#2a2b2f;box-shadow:inset 0 0 0 1px #67686d;"></div>
<div style="left:1265px;top:990px;width:48px;height:14px;background:#d08a4c;"></div>
<span class="t" style="left:1274.60px;top:988.50px;font-size:13px;line-height:17px;color:#5a1f10;letter-spacing:-0.04px;">Loop</span>
<div style="left:1316px;top:988px;width:45px;height:18px;background:#383a46;box-shadow:inset 0 0 0 1px #67686d;"></div>
<span class="t" style="left:1322.98px;top:988.50px;font-size:13px;line-height:17px;color:#abb4c5;letter-spacing:-0.01px;">Once</span>
</body></html>
